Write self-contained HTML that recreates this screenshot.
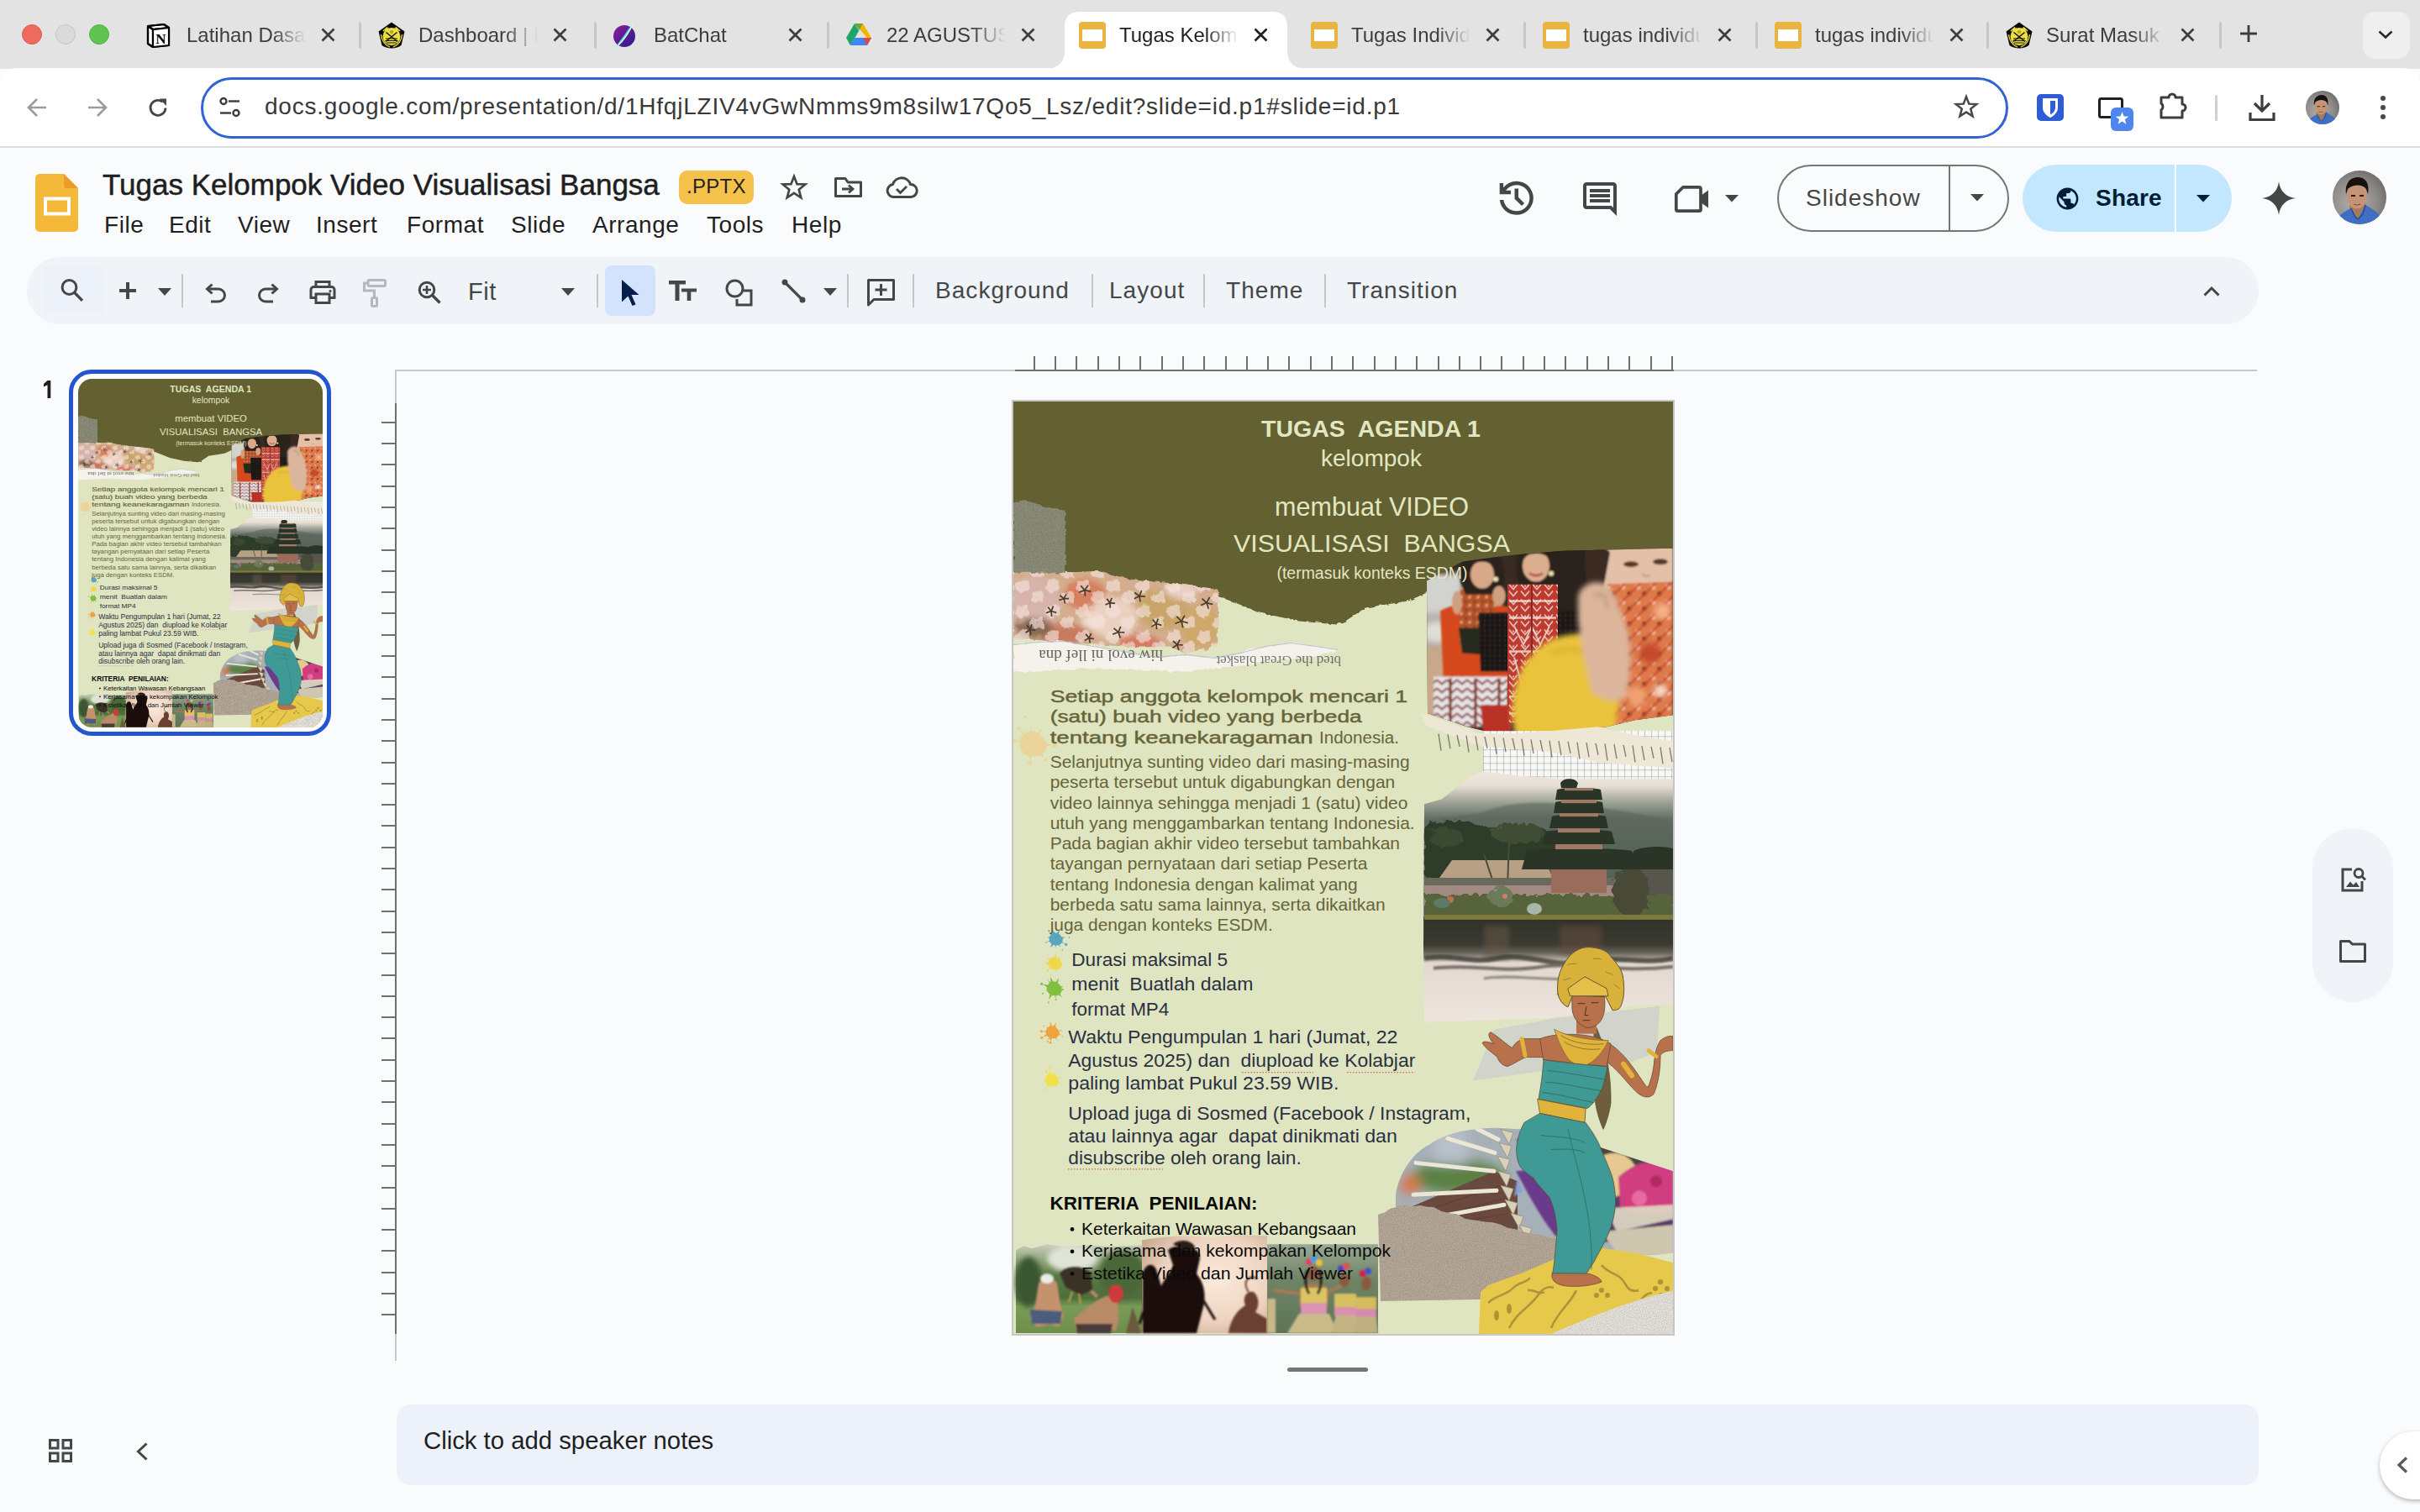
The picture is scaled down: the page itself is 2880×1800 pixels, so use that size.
<!DOCTYPE html>
<html><head><meta charset="utf-8">
<style>
*{box-sizing:border-box;margin:0;padding:0}
html,body{width:2880px;height:1800px;overflow:hidden;background:#f9fbfd;font-family:"Liberation Sans",sans-serif;position:relative}
.a{position:absolute}
.t{position:absolute;white-space:nowrap;line-height:1}
svg{position:absolute;overflow:visible}
.tl{width:24px;height:24px;border-radius:50%}
.tabtxt{font-size:24px;color:#3d3d3d;top:29px;overflow:hidden;width:142px;height:30px;line-height:26px;
 -webkit-mask-image:linear-gradient(90deg,#000 72%,transparent 100%)}
.sep{width:3px;height:32px;top:26px;background:#c7c7c7;border-radius:2px}
.slidesfav{width:32px;height:32px;border-radius:4px;background:#e9b43f;top:26px}
.slidesfav:after{content:"";position:absolute;left:4px;top:9px;width:24px;height:14px;background:#fff}
.menu{font-size:28px;color:#1f1f1f;top:254px;letter-spacing:0.55px;margin-left:-1px}
.tbt{font-size:28px;color:#444746;top:332px;letter-spacing:1.05px;margin-left:-2px}
.vsep{width:2px;height:40px;top:326px;background:#c7c7c7}
</style></head><body>
<!-- chrome -->
<div class="a" style="left:0;top:0;width:2880px;height:82px;background:#e3e3e3"></div>
<div class="a" style="left:0;top:81px;width:2880px;height:94px;background:#fff;border-radius:20px 20px 0 0"></div>
<div class="a" style="left:0;top:174px;width:2880px;height:2px;background:#dcdcdc"></div>
<div class="a tl" style="left:26px;top:29px;background:#ee6a5f;border:1px solid #dc5a4f"></div>
<div class="a tl" style="left:66px;top:29px;background:#dadada;border:1px solid #c4c4c4"></div>
<div class="a tl" style="left:106px;top:29px;background:#5fc452;border:1px solid #51b045"></div>
<svg style="left:0;top:0" width="2880" height="82"><path d="M1243 82 Q1267 82 1267 60 L1267 32 Q1267 14 1285 14 L1514 14 Q1532 14 1532 32 L1532 60 Q1532 82 1556 82 Z" fill="#fff"/></svg>
<!-- new tab + -->
<svg style="left:2666px;top:30px" width="20" height="20" viewBox="0 0 20 20"><path d="M10 0 V20 M0 10 H20" stroke="#3d3d3d" stroke-width="2.8"/></svg>
<div class="a" style="left:2812px;top:14px;width:56px;height:56px;border-radius:14px;background:#efefef"></div>
<svg style="left:2830px;top:36px" width="18" height="10" viewBox="0 0 18 10"><path d="M1.5 1.5 L9 8.5 L16.5 1.5" stroke="#2a2a2a" stroke-width="2.6" fill="none"/></svg>
<!-- nav -->
<svg style="left:32px;top:116px" width="24" height="24" viewBox="0 0 24 24"><path d="M23 12 H2 M12 2 L2 12 L12 22" stroke="#9a9a9a" stroke-width="2.6" fill="none"/></svg>
<svg style="left:104px;top:116px" width="24" height="24" viewBox="0 0 24 24"><path d="M1 12 H22 M12 2 L22 12 L12 22" stroke="#9a9a9a" stroke-width="2.6" fill="none"/></svg>
<svg style="left:176px;top:116px" width="25" height="25" viewBox="0 0 25 25"><path d="M21 12.5 A9 9 0 1 1 17.5 5.2" stroke="#474747" stroke-width="2.8" fill="none"/><path d="M13.5 1.5 L22 1.5 L22 10 Z" fill="#474747"/></svg>
<!-- omnibox -->
<div class="a" style="left:239px;top:92px;width:2151px;height:73px;border:3.5px solid #3064d2;border-radius:37px;background:#fff"></div>
<svg style="left:261px;top:116px" width="26" height="24" viewBox="0 0 26 24"><circle cx="5" cy="4.5" r="3.5" stroke="#3b3b3b" stroke-width="2.4" fill="none"/><path d="M11 4.5 H24" stroke="#3b3b3b" stroke-width="2.4"/><circle cx="20" cy="18.5" r="3.5" stroke="#3b3b3b" stroke-width="2.4" fill="none"/><path d="M1 18.5 H14" stroke="#3b3b3b" stroke-width="2.4"/></svg>
<div class="t" style="left:315px;top:113px;font-size:28px;color:#393939;letter-spacing:0.78px">docs.google.com/presentation/d/1HfqjLZIV4vGwNmms9m8silw17Qo5_Lsz/edit?slide=id.p1#slide=id.p1</div>
<svg style="left:2325px;top:112px" width="30" height="30" viewBox="0 0 24 24"><path d="M12 2.5 L14.6 9.3 L21.8 9.6 L16.2 14.1 L18.1 21.1 L12 17.1 L5.9 21.1 L7.8 14.1 L2.2 9.6 L9.4 9.3 Z" stroke="#474747" stroke-width="2" fill="none" stroke-linejoin="miter"/></svg>
<!-- extensions -->
<div class="a" style="left:2424px;top:112px;width:32px;height:32px;border-radius:5px;background:#2e5bd8"></div>
<svg style="left:2424px;top:112px" width="32" height="32" viewBox="0 0 32 32"><path d="M7 5 H25 V16 C25 22 20 26 16 28 C12 26 7 22 7 16 Z" fill="#fff"/><path d="M16 8 H22 V16 C22 20 19 23 16 24.5 Z" fill="#2e5bd8"/></svg>
<svg style="left:2497px;top:116px" width="44" height="40" viewBox="0 0 44 40"><rect x="1.5" y="1.5" width="27" height="22" rx="2" stroke="#1f1f1f" stroke-width="3" fill="none"/><rect x="15" y="12" width="27" height="28" rx="6" fill="#4f86ec"/><path d="M28.5 17 L30.6 22.5 L36.3 22.7 L31.8 26.2 L33.4 31.8 L28.5 28.5 L23.6 31.8 L25.2 26.2 L20.7 22.7 L26.4 22.5 Z" fill="#fff"/></svg>
<svg style="left:2569px;top:109px" width="34" height="34" viewBox="0 0 34 34"><path d="M3 7 H12 A4 4 0 0 1 20 7 H28 V15 A4 4 0 0 1 28 23 V31 H3 V22 A5 5 0 0 0 3 14 Z" stroke="#3d3d3d" stroke-width="3" fill="none" stroke-linejoin="round"/></svg>
<div class="a" style="left:2636px;top:113px;width:3px;height:31px;background:#d0d0d0;border-radius:2px"></div>
<svg style="left:2676px;top:112px" width="32" height="33" viewBox="0 0 32 33"><path d="M16 1 V20 M7 11 L16 20 L25 11" stroke="#3d3d3d" stroke-width="3.2" fill="none"/><path d="M2 22 V30.5 H30 V22" stroke="#3d3d3d" stroke-width="3.2" fill="none"/></svg>
<svg style="left:2744px;top:108px" width="40" height="40" viewBox="0 0 64 64"><defs><radialGradient id="avg1" cx=".4" cy=".6" r=".7"><stop offset="0" stop-color="#b3b0ad"/><stop offset=".6" stop-color="#8e8b88"/><stop offset="1" stop-color="#6a6664"/></radialGradient><clipPath id="avc1"><circle cx="32" cy="32" r="32"/></clipPath></defs><g clip-path="url(#avc1)"><rect width="64" height="64" fill="url(#avg1)"/><path d="M20 40 L39 38 L40 56 L20 56 Z" fill="#a87a5c"/><path d="M4 64 L8 54 C14 48 20 46 22 45 L30 58 L39 41 C44 44 52 48 56 54 L60 64 Z" fill="#3f6fc2"/><path d="M22 45 L26 54 L30 58 M39 41 L36 52 L30 58" stroke="#24458a" stroke-width="1.2" fill="none"/><ellipse cx="29" cy="30" rx="12" ry="15.5" fill="#c49474"/><path d="M16 28 C14 14 22 8 30 8 C40 8 44 16 42 28 L40 22 C36 16 24 16 18 22 Z" fill="#17120f"/><path d="M22 30 h5 M32 30 h5" stroke="#2a1a14" stroke-width="1.8"/><path d="M25 40 q4 2 8 0" stroke="#7a4a3a" stroke-width="1.2" fill="none"/></g></svg>
<div class="a" style="left:2833px;top:114px;width:6px;height:6px;border-radius:50%;background:#474747"></div>
<div class="a" style="left:2833px;top:125px;width:6px;height:6px;border-radius:50%;background:#474747"></div>
<div class="a" style="left:2833px;top:136px;width:6px;height:6px;border-radius:50%;background:#474747"></div>

<!-- tabs -->
<svg style="left:174px;top:27px" width="29" height="30" viewBox="0 0 29 30"><path d="M2 4 L21 2 L27 6 L27 27 L8 29 L2 25 Z" fill="#fff" stroke="#000" stroke-width="2.2" stroke-linejoin="round"/><path d="M2 4 L8 8 L27 6 M8 8 L8 29" stroke="#000" stroke-width="2.2" fill="none"/><path d="M8 8 L27 6 L27 27 L8 29 Z" fill="#fff"/><text x="17.5" y="24.5" font-family="Liberation Serif" font-weight="bold" font-size="17" text-anchor="middle" fill="#000">N</text><path d="M2 4 L21 2 L27 6 L27 27 L8 29 L2 25 Z" fill="none" stroke="#000" stroke-width="2.2" stroke-linejoin="round"/><path d="M2 4 L8 8 L27 6 M8 8 L8 29" stroke="#000" stroke-width="2.2" fill="none"/></svg>
<div class="t tabtxt" style="left:222px;color:#3d3d3d">Latihan Dasar Notion</div>
<svg style="left:382px;top:33px" width="17" height="17" viewBox="0 0 17 17"><path d="M1.5 1.5 L15.5 15.5 M15.5 1.5 L1.5 15.5" stroke="#3d3d3d" stroke-width="2.7"/></svg>
<div class="a sep" style="left:427px"></div>
<svg style="left:450px;top:26px" width="32" height="32" viewBox="0 0 32 32"><path d="M16 0.5 L31.5 11.5 L27.5 28 C22 32.5 10 32.5 4.5 28 L0.5 11.5 Z" fill="#0a0a0a"/><circle cx="16" cy="17.5" r="10.5" fill="#ece040"/><path d="M6 11 L11 6.5 L9.5 10 L13 8 M26 11 L21 6.5 L22.5 10 L19 8" stroke="#ece040" stroke-width="1.6" fill="none"/><path d="M3.5 15 C4 22 8 28 14 30 M28.5 15 C28 22 24 28 18 30" stroke="#d8c838" stroke-width="1.5" fill="none"/><path d="M9.5 12.5 L23 23.5 M22.5 12.5 L9 23.5" stroke="#111" stroke-width="1.5"/><path d="M9 20 H23 M8.5 22.5 H23.5 M10 25 H22" stroke="#111" stroke-width="1.1"/><circle cx="16" cy="12" r="2.2" fill="#b8a830"/></svg>
<div class="t tabtxt" style="left:498px;color:#3d3d3d">Dashboard | ESDM</div>
<svg style="left:658px;top:33px" width="17" height="17" viewBox="0 0 17 17"><path d="M1.5 1.5 L15.5 15.5 M15.5 1.5 L1.5 15.5" stroke="#3d3d3d" stroke-width="2.7"/></svg>
<div class="a sep" style="left:707px"></div>
<svg style="left:730px;top:26px" width="28" height="32" viewBox="0 0 28 32"><defs><linearGradient id="bg1" x1="0" y1="0" x2="1" y2="1"><stop offset="0" stop-color="#8a1f9e"/><stop offset="1" stop-color="#2a1a8a"/></linearGradient></defs><circle cx="13" cy="17" r="13" fill="url(#bg1)"/><path d="M24 1 C18 8 12 18 3 29 C10 26 17 18 24 1Z" fill="#6fe0d0"/><path d="M24 1 C20 10 14 20 6 28" stroke="#d8fff8" stroke-width="1.2" fill="none"/></svg>
<div class="t tabtxt" style="left:778px;color:#3d3d3d">BatChat</div>
<svg style="left:938px;top:33px" width="17" height="17" viewBox="0 0 17 17"><path d="M1.5 1.5 L15.5 15.5 M15.5 1.5 L1.5 15.5" stroke="#3d3d3d" stroke-width="2.7"/></svg>
<div class="a sep" style="left:984px"></div>
<svg style="left:1007px;top:28px" width="30" height="27" viewBox="0 0 30 27"><path d="M10 0 L20 0 L30 17 L25 17 Z" fill="#f6b400"/><path d="M10 0 L0 17 L5 26 L15 9 Z" fill="#20a464"/><path d="M5 26 L25 26 L30 17 L10 17 Z" fill="#4285f4"/><path d="M25 26 L30 17 L25 17 L20 17 Z" fill="#ea4335" opacity=".9"/><path d="M10 0 L15 9 L20 0Z" fill="#0f9d58" opacity=".6"/></svg>
<div class="t tabtxt" style="left:1055px;color:#3d3d3d">22 AGUSTUS 2025</div>
<svg style="left:1215px;top:33px" width="17" height="17" viewBox="0 0 17 17"><path d="M1.5 1.5 L15.5 15.5 M15.5 1.5 L1.5 15.5" stroke="#3d3d3d" stroke-width="2.7"/></svg>
<div class="a slidesfav" style="left:1284px"></div>
<div class="t tabtxt" style="left:1332px;color:#1f1f1f">Tugas Kelompok Video</div>
<svg style="left:1492px;top:33px" width="17" height="17" viewBox="0 0 17 17"><path d="M1.5 1.5 L15.5 15.5 M15.5 1.5 L1.5 15.5" stroke="#1f1f1f" stroke-width="2.7"/></svg>
<div class="a slidesfav" style="left:1560px"></div>
<div class="t tabtxt" style="left:1608px;color:#3d3d3d">Tugas Individu</div>
<svg style="left:1768px;top:33px" width="17" height="17" viewBox="0 0 17 17"><path d="M1.5 1.5 L15.5 15.5 M15.5 1.5 L1.5 15.5" stroke="#3d3d3d" stroke-width="2.7"/></svg>
<div class="a sep" style="left:1813px"></div>
<div class="a slidesfav" style="left:1836px"></div>
<div class="t tabtxt" style="left:1884px;color:#3d3d3d">tugas individu</div>
<svg style="left:2044px;top:33px" width="17" height="17" viewBox="0 0 17 17"><path d="M1.5 1.5 L15.5 15.5 M15.5 1.5 L1.5 15.5" stroke="#3d3d3d" stroke-width="2.7"/></svg>
<div class="a sep" style="left:2089px"></div>
<div class="a slidesfav" style="left:2112px"></div>
<div class="t tabtxt" style="left:2160px;color:#3d3d3d">tugas individu</div>
<svg style="left:2320px;top:33px" width="17" height="17" viewBox="0 0 17 17"><path d="M1.5 1.5 L15.5 15.5 M15.5 1.5 L1.5 15.5" stroke="#3d3d3d" stroke-width="2.7"/></svg>
<div class="a sep" style="left:2364px"></div>
<svg style="left:2387px;top:26px" width="32" height="32" viewBox="0 0 32 32"><path d="M16 0.5 L31.5 11.5 L27.5 28 C22 32.5 10 32.5 4.5 28 L0.5 11.5 Z" fill="#0a0a0a"/><circle cx="16" cy="17.5" r="10.5" fill="#ece040"/><path d="M6 11 L11 6.5 L9.5 10 L13 8 M26 11 L21 6.5 L22.5 10 L19 8" stroke="#ece040" stroke-width="1.6" fill="none"/><path d="M3.5 15 C4 22 8 28 14 30 M28.5 15 C28 22 24 28 18 30" stroke="#d8c838" stroke-width="1.5" fill="none"/><path d="M9.5 12.5 L23 23.5 M22.5 12.5 L9 23.5" stroke="#111" stroke-width="1.5"/><path d="M9 20 H23 M8.5 22.5 H23.5 M10 25 H22" stroke="#111" stroke-width="1.1"/><circle cx="16" cy="12" r="2.2" fill="#b8a830"/></svg>
<div class="t tabtxt" style="left:2435px;color:#3d3d3d">Surat Masuk</div>
<svg style="left:2595px;top:33px" width="17" height="17" viewBox="0 0 17 17"><path d="M1.5 1.5 L15.5 15.5 M15.5 1.5 L1.5 15.5" stroke="#3d3d3d" stroke-width="2.7"/></svg>
<div class="a sep" style="left:2641px"></div>
<!-- header -->
<!-- slides logo -->
<svg style="left:42px;top:207px" width="52" height="70" viewBox="0 0 52 70"><path d="M5 0 H34 L51 17 V64 A5 5 0 0 1 46 69 H5 A5 5 0 0 1 0 64 V5 A5 5 0 0 1 5 0Z" fill="#f5b93a"/><path d="M34 0 L51 17 H37 A3 3 0 0 1 34 14 Z" fill="#ef9a2c"/><rect x="10" y="27.5" width="32" height="22" fill="#fff"/><rect x="14" y="31.5" width="24" height="14" fill="#f5b93a"/></svg>
<div class="t" style="left:122px;top:202px;font-size:35px;color:#1f1f1f;letter-spacing:0px;-webkit-text-stroke:0.5px #1f1f1f">Tugas Kelompok Video Visualisasi Bangsa</div>
<div class="a" style="left:808px;top:203px;width:89px;height:40px;border-radius:10px;background:#f4c24a"></div>
<div class="t" style="left:817px;top:210px;font-size:24px;color:#1f1f1f;letter-spacing:0.3px">.PPTX</div>
<svg style="left:929px;top:207px" width="32" height="32" viewBox="0 0 24 24"><path d="M12 2.2 L14.7 9.1 L22 9.4 L16.3 14 L18.2 21.2 L12 17.1 L5.8 21.2 L7.7 14 L2 9.4 L9.3 9.1 Z" stroke="#444746" stroke-width="2" fill="none"/></svg>
<svg style="left:993px;top:211px" width="33" height="24" viewBox="0 0 33 24"><path d="M1.5 3 V22.5 H31.5 V6 H16 L13 1.5 H1.5 Z" stroke="#444746" stroke-width="3" fill="none" stroke-linejoin="round"/><path d="M9 14 H22 M17 9.5 L22 14 L17 18.5" stroke="#444746" stroke-width="2.8" fill="none"/></svg>
<svg style="left:1054px;top:210px" width="38" height="26" viewBox="0 0 38 26"><path d="M9 24.5 A7.5 7.5 0 0 1 8.5 9.6 A11 11 0 0 1 29.5 9.5 A7.5 7.5 0 0 1 30 24.5 Z" stroke="#444746" stroke-width="3" fill="none" stroke-linejoin="round"/><path d="M13 15 L17.5 19.5 L25 12" stroke="#444746" stroke-width="2.8" fill="none"/></svg>
<div class="t menu" style="left:125px">File</div>
<div class="t menu" style="left:202px">Edit</div>
<div class="t menu" style="left:284px">View</div>
<div class="t menu" style="left:377px">Insert</div>
<div class="t menu" style="left:485px">Format</div>
<div class="t menu" style="left:609px">Slide</div>
<div class="t menu" style="left:706px">Arrange</div>
<div class="t menu" style="left:842px">Tools</div>
<div class="t menu" style="left:943px">Help</div>
<!-- right header -->
<svg style="left:1778px;top:209px" width="53.5" height="53.5" viewBox="0 -960 960 960"><path d="M480-120q-138 0-240.5-91.5T122-440h82q14 104 92.5 172T480-200q117 0 198.5-81.5T760-480q0-117-81.5-198.5T480-760q-69 0-129 32t-101 88h110v80H120v-240h80v94q51-64 124.5-99T480-840q75 0 140.5 28.5t114 77q48.5 48.5 77 114T840-480q0 75-28.5 140.5t-77 114q-48.5 48.5-114 77T480-120Zm112-192L440-464v-216h80v184l128 128-56 56Z" fill="#444746"/></svg>
<svg style="left:1880px;top:213px" width="48" height="48" viewBox="0 0 24 24"><path d="M21.99 4c0-1.1-.89-2-1.99-2H4c-1.1 0-2 .9-2 2v12c0 1.1.9 2 2 2h14l4 4-.01-18zM20 4v13.17L18.83 16H4V4h16zM6 12h12v2H6zm0-3h12v2H6zm0-3h12v2H6z" fill="#444746"/></svg>
<svg style="left:1993px;top:221px" width="40" height="32" viewBox="0 0 40 32"><path d="M10 1.8 H29 A2 2 0 0 1 31 3.8 V28.2 A2 2 0 0 1 29 30.2 H3.8 A2 2 0 0 1 1.8 28.2 V10 Z" stroke="#444746" stroke-width="3.7" fill="none" stroke-linejoin="round"/><path d="M31 12 L40 5.5 V26.5 L31 20 Z" fill="#444746"/></svg>
<svg style="left:2053px;top:232px" width="16" height="9" viewBox="0 0 16 9"><path d="M0 0 H16 L8 8.5Z" fill="#444746"/></svg>
<div class="a" style="left:2115px;top:196px;width:276px;height:80px;border:2px solid #747775;border-radius:40px"></div>
<div class="a" style="left:2319px;top:197px;width:2px;height:78px;background:#747775"></div>
<div class="t" style="left:2149px;top:222px;font-size:28px;color:#444746;letter-spacing:1px">Slideshow</div>
<svg style="left:2345px;top:231px" width="16" height="9" viewBox="0 0 16 9"><path d="M0 0 H16 L8 8.5Z" fill="#444746"/></svg>
<div class="a" style="left:2407px;top:196px;width:249px;height:80px;border-radius:40px;background:#c2e7ff"></div>
<div class="a" style="left:2588px;top:196px;width:2px;height:80px;background:#fff"></div>
<svg style="left:2445px;top:221px" width="31" height="31" viewBox="0 0 24 24"><path d="M12 2C6.48 2 2 6.48 2 12s4.48 10 10 10 10-4.48 10-10S17.52 2 12 2zm-1 17.93c-3.95-.49-7-3.85-7-7.93 0-.62.08-1.21.21-1.79L9 15v1c0 1.1.9 2 2 2v1.93zm6.9-2.54c-.26-.81-1-1.39-1.9-1.39h-1v-3c0-.55-.45-1-1-1H8v-2h2c.55 0 1-.45 1-1V7h2c1.1 0 2-.9 2-2v-.41c2.93 1.19 5 4.06 5 7.41 0 2.08-.8 3.97-2.1 5.39z" fill="#001d35"/></svg>
<div class="t" style="left:2494px;top:222px;font-size:28px;font-weight:bold;color:#001d35;letter-spacing:0.2px">Share</div>
<svg style="left:2614px;top:232px" width="16" height="9" viewBox="0 0 16 9"><path d="M0 0 H16 L8 8.5Z" fill="#001d35"/></svg>
<svg style="left:2692px;top:216px" width="40" height="40" viewBox="0 0 40 40"><path d="M20 0 C21 11 29 19 40 20 C29 21 21 29 20 40 C19 29 11 21 0 20 C11 19 19 11 20 0Z" fill="#444746"/></svg>
<svg style="left:2776px;top:203px" width="64" height="64" viewBox="0 0 64 64"><defs><radialGradient id="avg2" cx=".4" cy=".6" r=".7"><stop offset="0" stop-color="#b3b0ad"/><stop offset=".6" stop-color="#8e8b88"/><stop offset="1" stop-color="#6a6664"/></radialGradient><clipPath id="avc2"><circle cx="32" cy="32" r="32"/></clipPath></defs><g clip-path="url(#avc2)"><rect width="64" height="64" fill="url(#avg2)"/><path d="M20 40 L39 38 L40 56 L20 56 Z" fill="#a87a5c"/><path d="M4 64 L8 54 C14 48 20 46 22 45 L30 58 L39 41 C44 44 52 48 56 54 L60 64 Z" fill="#3f6fc2"/><path d="M22 45 L26 54 L30 58 M39 41 L36 52 L30 58" stroke="#24458a" stroke-width="1.2" fill="none"/><ellipse cx="29" cy="30" rx="12" ry="15.5" fill="#c49474"/><path d="M16 28 C14 14 22 8 30 8 C40 8 44 16 42 28 L40 22 C36 16 24 16 18 22 Z" fill="#17120f"/><path d="M22 30 h5 M32 30 h5" stroke="#2a1a14" stroke-width="1.8"/><path d="M25 40 q4 2 8 0" stroke="#7a4a3a" stroke-width="1.2" fill="none"/></g></svg>

<!-- toolbar -->
<div class="a" style="left:32px;top:306px;width:2656px;height:80px;border-radius:40px;background:#f0f3f8"></div>
<div class="a" style="left:50px;top:318px;width:76px;height:56px;border-radius:8px;background:#edf1f9"></div>
<!-- search -->
<svg style="left:72px;top:332px" width="28" height="28" viewBox="0 0 28 28"><circle cx="10.5" cy="10" r="8.4" stroke="#444746" stroke-width="3" fill="none"/><path d="M16.8 16.5 L26 25.8" stroke="#444746" stroke-width="3.2"/></svg>
<svg style="left:142px;top:336px" width="20" height="20" viewBox="0 0 20 20"><path d="M10 0 V20 M0 10 H20" stroke="#444746" stroke-width="4"/></svg>
<svg style="left:188px;top:343px" width="16" height="9" viewBox="0 0 16 9"><path d="M0 0 H16 L8 9Z" fill="#444746"/></svg>
<div class="a vsep" style="left:216px"></div>
<!-- undo -->
<svg style="left:244px;top:337px" width="25" height="24" viewBox="0 0 25 24"><path d="M7 22 H16 A7.5 7.5 0 0 0 16 7 H3" stroke="#444746" stroke-width="3" fill="none"/><path d="M8.5 1.5 L2.5 7 L8.5 12.5" stroke="#444746" stroke-width="3" fill="none"/></svg>
<!-- redo -->
<svg style="left:307px;top:337px" width="25" height="24" viewBox="0 0 25 24"><path d="M18 22 H9 A7.5 7.5 0 0 1 9 7 H22" stroke="#444746" stroke-width="3" fill="none"/><path d="M16.5 1.5 L22.5 7 L16.5 12.5" stroke="#444746" stroke-width="3" fill="none"/></svg>
<!-- print -->
<svg style="left:368px;top:334px" width="32" height="28" viewBox="0 0 32 28"><path d="M8 7 V1.5 H24 V7" stroke="#444746" stroke-width="3" fill="none"/><path d="M7.5 20.5 H2 V11 A3.5 3.5 0 0 1 5.5 7.5 H26.5 A3.5 3.5 0 0 1 30 11 V20.5 H24.5" stroke="#444746" stroke-width="3" fill="none"/><rect x="8" y="16" width="16" height="10.5" stroke="#444746" stroke-width="3" fill="none"/><circle cx="25" cy="12.5" r="1.6" fill="#444746"/></svg>
<!-- paint format -->
<svg style="left:432px;top:332px" width="28" height="34" viewBox="0 0 28 34"><rect x="6" y="1.5" width="20.5" height="7" rx="1.5" stroke="#b4b7bb" stroke-width="3" fill="none"/><path d="M6 5 H1.5 V14 H13.5 V23" stroke="#b4b7bb" stroke-width="3" fill="none"/><rect x="10.5" y="22.5" width="6" height="10" rx="1.5" stroke="#b4b7bb" stroke-width="3" fill="none"/></svg>
<!-- zoom -->
<svg style="left:497px;top:334px" width="29" height="28" viewBox="0 0 29 28"><circle cx="11" cy="11" r="8.8" stroke="#444746" stroke-width="3" fill="none"/><path d="M17.5 17.5 L26.5 26.5" stroke="#444746" stroke-width="3.4"/><path d="M11 6 V16 M6 11 H16" stroke="#444746" stroke-width="2.6"/></svg>
<div class="t" style="left:557px;top:333px;font-size:29px;color:#444746;letter-spacing:0.5px">Fit</div>
<svg style="left:668px;top:343px" width="16" height="9" viewBox="0 0 16 9"><path d="M0 0 H16 L8 9Z" fill="#444746"/></svg>
<div class="a vsep" style="left:710px"></div>
<!-- select -->
<div class="a" style="left:720px;top:316px;width:60px;height:60px;border-radius:8px;background:#d3e3fd"></div>
<svg style="left:739px;top:332px" width="23" height="33" viewBox="0 0 23 33"><path d="M1.5 1.5 L21.5 19 L12.5 19 L17.5 30.5 L13.5 32 L8.5 20.5 L1.5 27 Z" fill="#041e49"/><path d="M1.5 1.5 L1.5 27" stroke="#041e49" stroke-width="1"/></svg>
<!-- Tt -->
<svg style="left:796px;top:334px" width="33" height="25" viewBox="0 0 33 25"><path d="M0 0 H20 V4.5 H12.5 V24 H7.5 V4.5 H0 Z" fill="#444746"/><path d="M15 9.5 H33 V13.5 H26.3 V24 H21.7 V13.5 H15 Z" fill="#444746"/></svg>
<!-- shapes -->
<svg style="left:863px;top:332px" width="33" height="33" viewBox="0 0 33 33"><circle cx="11.5" cy="11.5" r="9.5" stroke="#444746" stroke-width="3" fill="none"/><path d="M22 14 H31 V31 H14 V24" stroke="#444746" stroke-width="3" fill="none"/></svg>
<!-- line -->
<svg style="left:930px;top:332px" width="29" height="29" viewBox="0 0 29 29"><path d="M4 4 L25 25" stroke="#444746" stroke-width="3.2"/><circle cx="4" cy="4" r="3.5" fill="#444746"/><circle cx="25" cy="25" r="3.5" fill="#444746"/></svg>
<svg style="left:980px;top:343px" width="16" height="9" viewBox="0 0 16 9"><path d="M0 0 H16 L8 9Z" fill="#444746"/></svg>
<div class="a vsep" style="left:1008px"></div>
<!-- comment add -->
<svg style="left:1032px;top:332px" width="33" height="33" viewBox="0 0 33 33"><path d="M1.5 1.5 H31.5 V24.5 H8 L1.5 31 Z" stroke="#444746" stroke-width="3" fill="none" stroke-linejoin="round"/><path d="M16.5 6 V20 M9.5 13 H23.5" stroke="#444746" stroke-width="3"/></svg>
<div class="a vsep" style="left:1086px"></div>
<div class="t tbt" style="left:1115px">Background</div>
<div class="a vsep" style="left:1299px"></div>
<div class="t tbt" style="left:1322px">Layout</div>
<div class="a vsep" style="left:1432px"></div>
<div class="t tbt" style="left:1461px">Theme</div>
<div class="a vsep" style="left:1576px"></div>
<div class="t tbt" style="left:1605px">Transition</div>
<svg style="left:2622px;top:341px" width="20" height="12" viewBox="0 0 20 12"><path d="M1.5 10.5 L10 2 L18.5 10.5" stroke="#444746" stroke-width="3" fill="none"/></svg>

<!-- main -->
<div class="a" style="left:471px;top:440px;width:2215px;height:2px;background:#c7c9c8"></div>
<div class="a" style="left:1208px;top:440px;width:784px;height:2px;background:#6f716f"></div>
<div class="a" style="left:1229.8px;top:424px;width:2px;height:16px;background:#6f716f"></div>
<div class="a" style="left:1255.1px;top:424px;width:2px;height:16px;background:#6f716f"></div>
<div class="a" style="left:1280.4px;top:424px;width:2px;height:16px;background:#6f716f"></div>
<div class="a" style="left:1305.7px;top:424px;width:2px;height:16px;background:#6f716f"></div>
<div class="a" style="left:1331.0px;top:424px;width:2px;height:16px;background:#6f716f"></div>
<div class="a" style="left:1356.3px;top:424px;width:2px;height:16px;background:#6f716f"></div>
<div class="a" style="left:1381.6px;top:424px;width:2px;height:16px;background:#6f716f"></div>
<div class="a" style="left:1406.9px;top:424px;width:2px;height:16px;background:#6f716f"></div>
<div class="a" style="left:1432.2px;top:424px;width:2px;height:16px;background:#6f716f"></div>
<div class="a" style="left:1457.5px;top:424px;width:2px;height:16px;background:#6f716f"></div>
<div class="a" style="left:1482.8px;top:424px;width:2px;height:16px;background:#6f716f"></div>
<div class="a" style="left:1508.1px;top:424px;width:2px;height:16px;background:#6f716f"></div>
<div class="a" style="left:1533.4px;top:424px;width:2px;height:16px;background:#6f716f"></div>
<div class="a" style="left:1558.7px;top:424px;width:2px;height:16px;background:#6f716f"></div>
<div class="a" style="left:1584.0px;top:424px;width:2px;height:16px;background:#6f716f"></div>
<div class="a" style="left:1609.3px;top:424px;width:2px;height:16px;background:#6f716f"></div>
<div class="a" style="left:1634.6px;top:424px;width:2px;height:16px;background:#6f716f"></div>
<div class="a" style="left:1659.9px;top:424px;width:2px;height:16px;background:#6f716f"></div>
<div class="a" style="left:1685.2px;top:424px;width:2px;height:16px;background:#6f716f"></div>
<div class="a" style="left:1710.5px;top:424px;width:2px;height:16px;background:#6f716f"></div>
<div class="a" style="left:1735.8px;top:424px;width:2px;height:16px;background:#6f716f"></div>
<div class="a" style="left:1761.1px;top:424px;width:2px;height:16px;background:#6f716f"></div>
<div class="a" style="left:1786.4px;top:424px;width:2px;height:16px;background:#6f716f"></div>
<div class="a" style="left:1811.7px;top:424px;width:2px;height:16px;background:#6f716f"></div>
<div class="a" style="left:1837.0px;top:424px;width:2px;height:16px;background:#6f716f"></div>
<div class="a" style="left:1862.3px;top:424px;width:2px;height:16px;background:#6f716f"></div>
<div class="a" style="left:1887.6px;top:424px;width:2px;height:16px;background:#6f716f"></div>
<div class="a" style="left:1912.9px;top:424px;width:2px;height:16px;background:#6f716f"></div>
<div class="a" style="left:1938.2px;top:424px;width:2px;height:16px;background:#6f716f"></div>
<div class="a" style="left:1963.5px;top:424px;width:2px;height:16px;background:#6f716f"></div>
<div class="a" style="left:1988.8px;top:424px;width:2px;height:16px;background:#6f716f"></div>
<div class="a" style="left:470px;top:440px;width:2px;height:1180px;background:#c7c9c8"></div>
<div class="a" style="left:470px;top:480px;width:2px;height:1108px;background:#6f716f"></div>
<div class="a" style="left:454px;top:501.7px;width:17px;height:2px;background:#6f716f"></div>
<div class="a" style="left:454px;top:527.0px;width:17px;height:2px;background:#6f716f"></div>
<div class="a" style="left:454px;top:552.3px;width:17px;height:2px;background:#6f716f"></div>
<div class="a" style="left:454px;top:577.6px;width:17px;height:2px;background:#6f716f"></div>
<div class="a" style="left:454px;top:602.9px;width:17px;height:2px;background:#6f716f"></div>
<div class="a" style="left:454px;top:628.2px;width:17px;height:2px;background:#6f716f"></div>
<div class="a" style="left:454px;top:653.5px;width:17px;height:2px;background:#6f716f"></div>
<div class="a" style="left:454px;top:678.8px;width:17px;height:2px;background:#6f716f"></div>
<div class="a" style="left:454px;top:704.1px;width:17px;height:2px;background:#6f716f"></div>
<div class="a" style="left:454px;top:729.4px;width:17px;height:2px;background:#6f716f"></div>
<div class="a" style="left:454px;top:754.7px;width:17px;height:2px;background:#6f716f"></div>
<div class="a" style="left:454px;top:780.0px;width:17px;height:2px;background:#6f716f"></div>
<div class="a" style="left:454px;top:805.3px;width:17px;height:2px;background:#6f716f"></div>
<div class="a" style="left:454px;top:830.6px;width:17px;height:2px;background:#6f716f"></div>
<div class="a" style="left:454px;top:855.9px;width:17px;height:2px;background:#6f716f"></div>
<div class="a" style="left:454px;top:881.2px;width:17px;height:2px;background:#6f716f"></div>
<div class="a" style="left:454px;top:906.5px;width:17px;height:2px;background:#6f716f"></div>
<div class="a" style="left:454px;top:931.8px;width:17px;height:2px;background:#6f716f"></div>
<div class="a" style="left:454px;top:957.1px;width:17px;height:2px;background:#6f716f"></div>
<div class="a" style="left:454px;top:982.4px;width:17px;height:2px;background:#6f716f"></div>
<div class="a" style="left:454px;top:1007.7px;width:17px;height:2px;background:#6f716f"></div>
<div class="a" style="left:454px;top:1033.0px;width:17px;height:2px;background:#6f716f"></div>
<div class="a" style="left:454px;top:1058.3px;width:17px;height:2px;background:#6f716f"></div>
<div class="a" style="left:454px;top:1083.6px;width:17px;height:2px;background:#6f716f"></div>
<div class="a" style="left:454px;top:1108.9px;width:17px;height:2px;background:#6f716f"></div>
<div class="a" style="left:454px;top:1134.2px;width:17px;height:2px;background:#6f716f"></div>
<div class="a" style="left:454px;top:1159.5px;width:17px;height:2px;background:#6f716f"></div>
<div class="a" style="left:454px;top:1184.8px;width:17px;height:2px;background:#6f716f"></div>
<div class="a" style="left:454px;top:1210.1px;width:17px;height:2px;background:#6f716f"></div>
<div class="a" style="left:454px;top:1235.4px;width:17px;height:2px;background:#6f716f"></div>
<div class="a" style="left:454px;top:1260.7px;width:17px;height:2px;background:#6f716f"></div>
<div class="a" style="left:454px;top:1286.0px;width:17px;height:2px;background:#6f716f"></div>
<div class="a" style="left:454px;top:1311.3px;width:17px;height:2px;background:#6f716f"></div>
<div class="a" style="left:454px;top:1336.6px;width:17px;height:2px;background:#6f716f"></div>
<div class="a" style="left:454px;top:1361.9px;width:17px;height:2px;background:#6f716f"></div>
<div class="a" style="left:454px;top:1387.2px;width:17px;height:2px;background:#6f716f"></div>
<div class="a" style="left:454px;top:1412.5px;width:17px;height:2px;background:#6f716f"></div>
<div class="a" style="left:454px;top:1437.8px;width:17px;height:2px;background:#6f716f"></div>
<div class="a" style="left:454px;top:1463.1px;width:17px;height:2px;background:#6f716f"></div>
<div class="a" style="left:454px;top:1488.4px;width:17px;height:2px;background:#6f716f"></div>
<div class="a" style="left:454px;top:1513.7px;width:17px;height:2px;background:#6f716f"></div>
<div class="a" style="left:454px;top:1539.0px;width:17px;height:2px;background:#6f716f"></div>
<div class="a" style="left:454px;top:1564.3px;width:17px;height:2px;background:#6f716f"></div>
<svg style="left:50px;top:452px" width="12" height="23" viewBox="0 0 12 23"><path d="M6.5 1 H10.3 V22 H6.5 V6.2 L2 8.6 V5 Z" fill="#1f1f1f"/></svg>
<div class="a" style="left:82px;top:440px;width:312px;height:436px;border:5.5px solid #2356ce;border-radius:27px;background:#fff"></div>
<div class="a" style="left:2752px;top:986px;width:96px;height:207px;border-radius:48px;background:#f0f4f9"></div>
<svg style="left:2785px;top:1031px" width="32" height="32" viewBox="0 0 32 32"><path d="M14 4 H3 V29 H26 V18" stroke="#444746" stroke-width="3" fill="none"/><path d="M7 25 L12 18.5 L15.5 22.5 L19 19 L23 25 Z" fill="#444746"/><circle cx="22" cy="8.5" r="5" stroke="#444746" stroke-width="2.8" fill="none"/><path d="M25.5 12 L30 16.5" stroke="#444746" stroke-width="3"/></svg>
<svg style="left:2784px;top:1119px" width="32" height="27" viewBox="0 0 32 27"><path d="M1.5 1.5 H12 L15.5 5 H30.5 V25.5 H1.5 Z" stroke="#444746" stroke-width="3" fill="none" stroke-linejoin="round"/></svg>
<div class="a" style="left:1532px;top:1628px;width:96px;height:5px;border-radius:3px;background:#747775"></div>
<div class="a" style="left:472px;top:1672px;width:2216px;height:96px;border-radius:18px;background:#edf2fa"></div>
<div class="t" style="left:504px;top:1700px;font-size:29.3px;color:#1f1f1f">Click to add speaker notes</div>
<svg style="left:58px;top:1713px" width="28" height="28" viewBox="0 0 28 28"><rect x="1.5" y="1.5" width="9.5" height="9.5" stroke="#444746" stroke-width="3" fill="none"/><rect x="17" y="1.5" width="9.5" height="9.5" stroke="#444746" stroke-width="3" fill="none"/><rect x="1.5" y="17" width="9.5" height="9.5" stroke="#444746" stroke-width="3" fill="none"/><rect x="17" y="17" width="9.5" height="9.5" stroke="#444746" stroke-width="3" fill="none"/></svg>
<svg style="left:161px;top:1717px" width="16" height="22" viewBox="0 0 16 22"><path d="M13.5 1.5 L3.5 11 L13.5 20.5" stroke="#444746" stroke-width="3" fill="none"/></svg>
<div class="a" style="left:2832px;top:1704px;width:100px;height:81px;border-radius:40px;background:#fff;box-shadow:0 2px 5px rgba(0,0,0,.28)"></div>
<svg style="left:2852px;top:1734px" width="14" height="20" viewBox="0 0 14 20"><path d="M12 1.5 L3 10 L12 18.5" stroke="#575b60" stroke-width="3.2" fill="none"/></svg>
<!-- slide -->
<div class="a" style="left:1204px;top:476px;width:789px;height:1114px;background:#c6c7c5"></div>
<svg style="left:1206px;top:478px" width="785" height="1110" viewBox="0 0 785 1112" preserveAspectRatio="none"><defs><clipPath id="slideClip"><rect width="785" height="1112"/></clipPath></defs><g id="slideContent" clip-path="url(#slideClip)">
<defs>
<clipPath id="womenClip"><path d="M492 214 L534 191 L594 183 L654 178 L785 175 V374 L740 380 L706 388 L650 395 L590 400 L540 388 L493 372 Z"/></clipPath>
<clipPath id="floralClip"><path d="M0 204 L62 204 L100 202 L130 210 L160 214 L200 218 L243 224 L245 250 L243 290 L225 296 L205 300 L185 292 L150 293 L100 290 L60 287 L0 282 Z"/></clipPath>
<clipPath id="templeClip"><path d="M489 480 L510 474 L530 458 L545 446 L560 441 L600 446 L650 450 L700 450 L785 450 V718 L740 720 L700 728 L640 735 L560 738 L489 740 L488 650 Z"/></clipPath>
<clipPath id="offerClip"><path d="M455 990 L455 946 C460 915 480 893 494 887 C510 876 530 868 572 866 L640 870 L700 890 L785 918 V1015 L761 1018 L700 1018 L600 1000 Z"/></clipPath>
<clipPath id="thumbClip"><rect width="785" height="1112" rx="44" ry="44"/></clipPath>
<filter id="soft" x="-10%" y="-10%" width="120%" height="120%"><feGaussianBlur stdDeviation="3"/></filter>
<filter id="soft2" x="-20%" y="-20%" width="140%" height="140%"><feGaussianBlur stdDeviation="7"/></filter>
<filter id="soft1" x="-10%" y="-10%" width="120%" height="120%"><feGaussianBlur stdDeviation="1.2"/></filter>
<filter id="grain" x="0" y="0" width="100%" height="100%"><feTurbulence type="fractalNoise" baseFrequency="0.9" numOctaves="2" seed="3" result="n"/><feColorMatrix in="n" type="matrix" values="0 0 0 0 0.5  0 0 0 0 0.5  0 0 0 0 0.5  0 0 0 1.2 -0.35"/><feComposite in2="SourceGraphic" operator="in"/><feBlend in2="SourceGraphic" mode="multiply"/></filter>
<filter id="torn" x="-5%" y="-5%" width="110%" height="110%"><feTurbulence type="fractalNoise" baseFrequency="0.12" numOctaves="3" seed="4"/><feDisplacementMap in="SourceGraphic" scale="6"/></filter>
<filter id="leaf" x="-5%" y="-5%" width="110%" height="110%"><feTurbulence type="fractalNoise" baseFrequency="0.15" numOctaves="2" seed="7"/><feDisplacementMap in="SourceGraphic" scale="10"/></filter>
<pattern id="batikRed" width="14" height="18" patternUnits="userSpaceOnUse"><rect width="14" height="18" fill="#bd3a2e"/><path d="M2 2 L7 8 L12 2 M2 10 L7 16 L12 10" stroke="#f0ddd4" stroke-width="1.3" fill="none"/><circle cx="7" cy="4" r="1" fill="#f0ddd4"/></pattern>
<pattern id="batikOr" width="10" height="10" patternUnits="userSpaceOnUse"><rect width="10" height="10" fill="#b4502a"/><circle cx="3" cy="3" r="1.6" fill="#f0d8b0"/><circle cx="8" cy="8" r="1.4" fill="#3a2418"/><path d="M0 5 L5 0 M5 10 L10 5" stroke="#d8782c" stroke-width="1"/></pattern>
<pattern id="lace" width="6" height="6" patternUnits="userSpaceOnUse"><rect width="6" height="6" fill="#1c1816"/><circle cx="3" cy="3" r="1.2" fill="#3a302a"/></pattern>
<pattern id="skirt" width="12" height="10" patternUnits="userSpaceOnUse"><rect width="12" height="10" fill="#e6e2e6"/><path d="M0 2 L6 7 L12 2" stroke="#7a3222" stroke-width="2" fill="none"/></pattern>
<pattern id="orCloth" width="18" height="18" patternUnits="userSpaceOnUse"><rect width="18" height="18" fill="#de7a4a"/><circle cx="5" cy="5" r="3" fill="#f6d0b8"/><circle cx="13" cy="13" r="2.5" fill="#2a1a14"/><path d="M0 9 L9 0 M9 18 L18 9" stroke="#c84a2a" stroke-width="2.5"/></pattern>
<pattern id="flowers" width="36" height="30" patternUnits="userSpaceOnUse"><g fill="#f4e2dc" opacity=".85"><circle cx="8" cy="8" r="4"/><circle cx="14" cy="6" r="4"/><circle cx="15" cy="12" r="4"/><circle cx="9" cy="14" r="4"/><circle cx="5" cy="11" r="3.5"/><circle cx="26" cy="22" r="4"/><circle cx="32" cy="20" r="4"/><circle cx="33" cy="26" r="3.5"/><circle cx="27" cy="28" r="3.5"/><circle cx="23" cy="25" r="3"/></g></pattern>
<pattern id="grid" width="8" height="8" patternUnits="userSpaceOnUse"><path d="M8 0 V8 H0" fill="none" stroke="#6e6e6e" stroke-width="0.9"/></pattern>
<linearGradient id="sky" x1="0" y1="0" x2="0" y2="1">
 <stop offset="0" stop-color="#f0e8de"/><stop offset=".1" stop-color="#e8dfd4"/><stop offset=".2" stop-color="#a4a89c"/><stop offset=".32" stop-color="#646e64"/><stop offset=".5" stop-color="#56625a"/>
</linearGradient>
<linearGradient id="water" x1="0" y1="0" x2="0" y2="1">
 <stop offset="0" stop-color="#30322a"/><stop offset=".25" stop-color="#3a3a30"/><stop offset=".33" stop-color="#6a665e"/><stop offset=".42" stop-color="#e2d8d0"/><stop offset="1" stop-color="#efe6de"/>
</linearGradient>
</defs>
<rect x="0" y="0" width="785" height="1112" fill="#dfe5c0"/>
<path filter="url(#torn)" d="M-10 -10 H795 V212 L740 218 L700 222 L600 232 L492 228 L470 238 L419 246 L395 262 L385 266 L340 262 L294 252 L269 242 L243 232 L200 222 L134 211 L94 206 L61 203 L-10 200 Z" fill="#646033"/>
<g filter="url(#torn)"><path d="M0 121 L10 118 L22 120 L35 125 L45 128 L62 130 V205 L30 207 L0 206 Z" fill="#8e8f7b" filter="url(#grain)"/></g>
<g filter="url(#torn)"><g clip-path="url(#floralClip)"><rect x="0" y="195" width="250" height="110" fill="#d4ad8e"/><g filter="url(#soft)"><ellipse cx="25" cy="238" rx="32" ry="30" fill="#d6b4aa"/><ellipse cx="85" cy="230" rx="25" ry="18" fill="#d5805f"/><ellipse cx="118" cy="258" rx="30" ry="25" fill="#ead0c0"/><ellipse cx="178" cy="248" rx="30" ry="24" fill="#c9a56a"/><ellipse cx="222" cy="268" rx="24" ry="26" fill="#cfa86c"/><ellipse cx="60" cy="277" rx="32" ry="12" fill="#c77a60"/><ellipse cx="150" cy="288" rx="25" ry="10" fill="#d67a64"/><ellipse cx="25" cy="270" rx="22" ry="12" fill="#8a6a52"/><ellipse cx="200" cy="225" rx="20" ry="10" fill="#e8d0c4"/><ellipse cx="95" cy="262" rx="14" ry="10" fill="#f0dcd0"/></g><rect x="0" y="195" width="250" height="110" fill="url(#flowers)" opacity=".75"/></g></g>
<path d="M85 225 M85 225 L92.1 226.6 M85 225 L85.5 232.2 M85 225 L78.2 227.5 M85 225 L80.2 219.6 M85 225 L89.0 219.0 " stroke="#4a3a2c" stroke-width="1.7"/>
<path d="M115 240 M115 240 L121.0 240.8 M115 240 L115.2 246.1 M115 240 L109.5 242.5 M115 240 L111.2 235.3 M115 240 L117.1 234.3 " stroke="#4a3a2c" stroke-width="1.7"/>
<path d="M150 232 M150 232 L156.9 232.5 M150 232 L151.0 238.9 M150 232 L143.8 235.1 M150 232 L144.4 227.9 M150 232 L152.6 225.6 " stroke="#4a3a2c" stroke-width="1.7"/>
<path d="M170 265 M170 265 L176.3 266.8 M170 265 L170.6 271.5 M170 265 L164.5 268.6 M170 265 L165.8 260.0 M170 265 L172.3 258.9 " stroke="#4a3a2c" stroke-width="1.7"/>
<path d="M125 275 M125 275 L132.2 275.3 M125 275 L127.2 281.9 M125 275 L118.2 277.6 M125 275 L119.4 270.4 M125 275 L127.7 268.3 " stroke="#4a3a2c" stroke-width="1.7"/>
<path d="M200 262 M200 262 L207.7 264.1 M200 262 L201.8 269.8 M200 262 L192.5 264.7 M200 262 L194.4 256.3 M200 262 L203.9 255.1 " stroke="#4a3a2c" stroke-width="1.7"/>
<path d="M45 250 M45 250 L51.2 251.8 M45 250 L45.7 256.4 M45 250 L39.0 252.1 M45 250 L41.0 245.0 M45 250 L47.5 244.1 " stroke="#4a3a2c" stroke-width="1.7"/>
<path d="M195 290 M195 290 L201.7 290.3 M195 290 L196.8 296.5 M195 290 L189.5 293.8 M195 290 L189.9 285.6 M195 290 L198.2 284.1 " stroke="#4a3a2c" stroke-width="1.7"/>
<path d="M90 282 M90 282 L95.9 283.2 M90 282 L91.3 287.9 M90 282 L84.8 285.1 M90 282 L86.1 277.4 M90 282 L92.7 276.6 " stroke="#4a3a2c" stroke-width="1.7"/>
<path d="M20 272 M20 272 L26.6 273.0 M20 272 L20.7 278.6 M20 272 L14.6 275.8 M20 272 L16.0 266.7 M20 272 L22.1 265.7 " stroke="#4a3a2c" stroke-width="1.7"/>
<path d="M230 240 M230 240 L237.3 241.9 M230 240 L232.3 247.1 M230 240 L223.1 242.9 M230 240 L224.5 235.0 M230 240 L233.5 233.4 " stroke="#4a3a2c" stroke-width="1.7"/>
<path d="M60 235 M60 235 L66.0 235.1 M60 235 L61.5 240.8 M60 235 L54.3 237.0 M60 235 L55.3 231.2 M60 235 L63.1 229.8 " stroke="#4a3a2c" stroke-width="1.7"/>
<g filter="url(#torn)"><path d="M0 290 L30 287 L60 286 L95 292 L130 298 L170 305 L205 302 L240 306 L270 300 L300 292 L330 288 L360 292 L386 296 L362 304 L320 308 L280 314 L240 318 L200 322 L150 320 L100 318 L50 320 L0 323 Z" fill="#f4f2ea"/></g>
<text xml:space="preserve" x="2" y="309" font-family="Liberation Serif" font-size="19" font-weight="normal" fill="#4a4a4a" text-anchor="start" transform="rotate(180 90 303)" opacity=".85">hiw evol ni llef dna</text>
<text xml:space="preserve" x="190" y="314" font-family="Liberation Serif" font-size="17" font-weight="normal" fill="#4a4a4a" text-anchor="start" transform="rotate(180 290 309)" opacity=".75">bted the Great blasket</text>
<path d="M0 290 L30 287 L60 286 L95 292 L130 298 L170 305 L205 302 L240 306 L270 300 L300 292 L330 288 L360 292 L386 296" stroke="#a0a8d8" stroke-width="1.2" fill="none" opacity=".6"/>
<g clip-path="url(#womenClip)"><rect x="480" y="170" width="310" height="240" fill="#3a2a24"/><g filter="url(#soft)"><rect x="480" y="205" width="55" height="50" fill="#d2d2ce"/><rect x="480" y="252" width="45" height="40" fill="#b8b2aa"/><ellipse cx="505" cy="275" rx="18" ry="12" fill="#e0ddd6"/><rect x="480" y="292" width="50" height="85" fill="#c8a888"/><rect x="640" y="170" width="60" height="90" fill="#2a221e"/></g><g filter="url(#soft1)"><path d="M508 250 C520 240 560 238 590 245 L590 338 L512 336 Z" fill="#d64a1c"/><path d="M532 222 L575 220 L574 290 L530 292 Z" fill="url(#batikOr)"/><path d="M530 270 L562 270 L560 302 L534 300 Z" fill="#262a1e"/><path d="M532 215 C530 190 540 176 558 176 C578 176 586 192 584 215 L578 230 L538 230 Z" fill="#2a201c"/><ellipse cx="558" cy="206" rx="14" ry="17" fill="#d9a888"/><path d="M544 196 C548 186 568 186 572 196" stroke="#2a201c" stroke-width="5" fill="none"/><circle cx="574" cy="212" r="3" fill="#f0e0b0"/><path d="M553 252 L686 250 L684 322 L556 322 Z" fill="url(#lace)"/><path d="M598 200 C596 180 606 168 622 168 C642 168 652 182 650 200 L646 218 L602 218 Z" fill="#2a201c"/><ellipse cx="622" cy="196" rx="16" ry="19" fill="#dcae90"/><path d="M606 186 C612 176 632 176 640 186" stroke="#2a201c" stroke-width="5" fill="none"/><path d="M614 205 q8 5 16 0" stroke="#b04838" stroke-width="2.5" fill="none"/><circle cx="640" cy="205" r="3" fill="#f0e0b0"/><rect x="500" y="328" width="88" height="60" fill="url(#skirt)"/><path d="M520 330 V392 M550 330 V392 M578 330 V392" stroke="#7a3222" stroke-width="3"/><path d="M556 362 L596 362 L590 404 L560 404 Z" fill="#b83028"/><ellipse cx="528" cy="240" rx="6" ry="14" fill="#d0a080"/><ellipse cx="578" cy="232" rx="8" ry="12" fill="#d0a080"/></g><rect x="588" y="218" width="60" height="165" fill="url(#batikRed)"/><g opacity=".8" stroke="#f2e2da" fill="none"><path d="M590 238 H646 M590 258 H646 M590 298 H646 M590 352 H646 M590 372 H646" stroke-width="2.5"/><path d="M596 268 L607 290 L617 268 L627 290 L638 268 M596 305 L607 345 L617 305 L627 345 L638 305" stroke-width="2"/></g><path d="M617 218 V383" stroke="#8a2a22" stroke-width="2"/><g filter="url(#soft1)"><path d="M690 176 L785 172 L785 225 C760 232 720 230 690 222 Z" fill="#e4c0a8"/><ellipse cx="735" cy="194" rx="9" ry="3.5" fill="#5a3a2a"/><ellipse cx="770" cy="191" rx="9" ry="3.5" fill="#5a3a2a"/><path d="M748 205 q4 6 10 2" stroke="#c89880" stroke-width="2" fill="none"/><path d="M680 176 C690 170 705 172 710 180 L700 235 L682 232 Z" fill="#3a2a22"/><path d="M707 218 L785 215 L785 390 L707 388 Z" fill="url(#orCloth)"/></g><g filter="url(#soft)"><circle cx="758" cy="300" r="12" fill="#c64a2c"/><circle cx="742" cy="352" r="12" fill="#f0a070"/><circle cx="772" cy="250" r="10" fill="#f4b088"/><circle cx="770" cy="345" r="8" fill="#f6d8c8"/><path d="M597 400 C588 350 600 305 640 284 C668 272 705 276 718 292 L726 330 C722 360 716 380 716 402 Z" fill="#e9c33a"/><path d="M640 300 C660 292 690 296 705 310" stroke="#c8a028" stroke-width="4" fill="none" opacity=".6"/><path d="M672 232 C676 216 698 210 710 222 C718 234 724 252 731 272 C737 300 736 330 728 354 C716 360 696 356 688 345 C682 320 676 290 672 262 Z" fill="#dcb69c"/><path d="M690 232 C698 226 708 232 706 246" stroke="#b88a70" stroke-width="3" fill="none"/></g></g>
<path d="M559 393 L785 393 V462 L740 460 L700 458 L640 452 L590 449 L559 448 Z" fill="#f7f7f5"/>
<path d="M559 393 L785 393 V462 L740 460 L700 458 L640 452 L590 449 L559 448 Z" fill="url(#grid)" opacity=".8"/>
<path d="M484 371 L520 384 L556 396 L600 396 L650 392 L695 388 L740 398 L785 405 L785 437 L740 434 L695 430 L650 420 L625 416 L590 414 L556 411 L520 398 L491 386 Z" fill="#eee7d6"/>
<g opacity=".6" stroke="#3a3a3a" stroke-width="1.4"><path d="M506 396.4 l3 20"/><path d="M517 397.0 l3 17"/><path d="M528 397.7 l3 14"/><path d="M539 398.3 l3 20"/><path d="M550 399.0 l3 17"/><path d="M561 399.7 l3 14"/><path d="M572 400.3 l3 20"/><path d="M583 401.0 l3 17"/><path d="M594 401.6 l3 14"/><path d="M605 402.3 l3 20"/><path d="M616 403.0 l3 17"/><path d="M627 403.6 l3 14"/><path d="M638 404.3 l3 20"/><path d="M649 404.9 l3 17"/><path d="M660 405.6 l3 14"/><path d="M671 406.3 l3 20"/><path d="M682 406.9 l3 17"/><path d="M693 407.6 l3 14"/><path d="M704 408.2 l3 20"/><path d="M715 408.9 l3 17"/><path d="M726 409.6 l3 14"/><path d="M737 410.2 l3 20"/><path d="M748 410.9 l3 17"/><path d="M759 411.5 l3 14"/><path d="M770 412.2 l3 20"/><path d="M781 412.9 l3 17"/></g>
<g clip-path="url(#templeClip)"><rect x="480" y="440" width="310" height="180" fill="url(#sky)"/><g filter="url(#soft1)"><path d="M560 490 C600 470 680 478 785 500 V540 H489 V500 Z" fill="#5a665c" opacity=".6"/></g><rect x="480" y="615" width="310" height="130" fill="url(#water)"/><g filter="url(#leaf)"><path d="M489 505 C510 495 545 500 570 510 C590 505 620 500 640 515 C650 530 640 550 620 556 L560 560 C540 570 500 575 489 565 Z" fill="#2e3c29"/><ellipse cx="600" cy="515" rx="32" ry="12" fill="#3f4e36"/><ellipse cx="515" cy="520" rx="20" ry="12" fill="#3a4a32"/></g><path d="M507 568 L522 547 L632 547 L642 568 Z" fill="#b8a084"/><path d="M590 520 L588 580 M560 540 L575 585" stroke="#4a4a3a" stroke-width="2"/><rect x="489" y="568" width="296" height="10" fill="#6a6a5c"/><rect x="489" y="577" width="296" height="24" fill="#a28a82"/><rect x="640" y="556" width="66" height="30" fill="#9a6c5c"/><path d="M742 558 H785 V600 H742 Z" fill="#56564c"/><g filter="url(#leaf)"><rect x="489" y="588" width="296" height="26" fill="#56633a"/><ellipse cx="735" cy="585" rx="22" ry="30" fill="#4a4a38"/><ellipse cx="580" cy="590" rx="15" ry="12" fill="#6a7a5a"/></g><circle cx="520" cy="594" r="4" fill="#c07050"/><circle cx="585" cy="590" r="3" fill="#d08060"/><ellipse cx="510" cy="598" rx="10" ry="6" fill="#5a7a6a"/><ellipse cx="620" cy="605" rx="9" ry="7" fill="#a8b8a8"/><rect x="489" y="612" width="296" height="6" fill="#7e7a3c"/><g fill="#2b3527"><path d="M651 455 C655 448 668 448 672 455 L670 461 H652Z"/><path d="M647 463 C650 460 696 460 699 463 L701 475 H645Z"/><path d="M645 478 C648 475 698 475 701 478 L703 491 H643Z"/><path d="M641 495 C645 492 701 492 705 495 L708 509 H638Z"/><path d="M634 513 C640 510 706 510 712 513 L716 528 H630Z"/><path d="M611 536 C625 532 720 532 736 536 L745 558 H605Z"/><path d="M738 536 C750 530 775 530 785 533 V558 H733Z"/></g><g fill="#a07866"><rect x="656" y="461" width="34" height="3"/><rect x="652" y="475" width="42" height="4"/><rect x="650" y="491" width="46" height="4"/><rect x="648" y="509" width="50" height="5"/><rect x="645" y="528" width="56" height="6"/></g><g opacity=".5"><rect x="560" y="625" width="30" height="40" fill="#6a5a4a" filter="url(#soft)"/><rect x="650" y="625" width="50" height="35" fill="#6a5040" filter="url(#soft)"/></g><g filter="url(#soft1)" opacity=".8"><path d="M489 664 C520 658 545 671 575 664 C610 656 640 676 680 668 C720 660 750 672 785 664" stroke="#3e3c34" stroke-width="6" fill="none"/><path d="M500 676 C540 670 580 682 630 674 C670 668 720 682 785 674" stroke="#5a564c" stroke-width="4" fill="none"/><path d="M560 688 C600 682 640 694 700 686" stroke="#7a766c" stroke-width="3" fill="none"/></g></g>
<path d="M547 810 L572 749 L647 735 L769 721 L766 776 L730 790 L700 795 L627 799 Z" fill="#d2d3ca"/>
<g clip-path="url(#offerClip)"><rect x="450" y="860" width="340" height="165" fill="#a6b0b8"/><g filter="url(#soft2)"><ellipse cx="530" cy="925" rx="55" ry="20" fill="#5a8042"/><circle cx="472" cy="934" r="11" fill="#e27040"/><rect x="500" y="870" width="40" height="40" fill="#b8c0c8"/></g><path d="M470 962 L572 918 L600 930 L600 995 L500 980 Z" fill="#6a4a3e"/><g stroke="#5a3a30" stroke-width="1.2" opacity=".6"><path d="M490 965 L580 935 M495 975 L585 950 M510 982 L590 968"/></g><g filter="url(#soft1)"><path d="M598 880 C620 900 640 940 650 1000 L785 1005 L785 900 L700 880 Z" fill="#4a4a3a"/><path d="M650 930 L785 940 V1000 L660 990 Z" fill="#5a3a6a"/><path d="M598 918 C610 940 625 970 645 995 L665 990 C650 960 640 930 630 915 Z" fill="#6a3a8a"/><path d="M600 925 L606 942 L596 948 Z" fill="#8aa0d8"/><path d="M700 900 C720 890 745 900 748 940 L710 950 Z" fill="#e6c890"/><path d="M720 925 C740 905 770 900 785 915 V968 C765 965 740 975 722 960 Z" fill="#d03c80"/><circle cx="745" cy="950" r="9" fill="#e86aa0"/><circle cx="765" cy="930" r="7" fill="#b02a60"/><path d="M705 962 L785 958 L785 975 L718 990 Z" fill="#e0dcc4" opacity=".9"/><path d="M700 990 L785 982 V1018 L720 1018 Z" fill="#cfc6b0"/></g><g stroke="#ece6d6" stroke-width="5" stroke-linecap="round"><path d="M551 867 L577 880"/><path d="M517 879 L573 896"/><path d="M479 908 L572 918"/><path d="M476 946 L575 941"/><path d="M506 972 L584 958"/></g><g fill="#d8d0b8" stroke="#9a9078" stroke-width=".8"><path d="M580 868 l15 4 l-5 14 z"/><path d="M578 884 l15 4 l-5 14 z"/><path d="M576 900 l15 4 l-5 14 z"/><path d="M577 918 l15 4 l-5 14 z"/><path d="M580 935 l15 4 l-5 14 z"/><path d="M585 952 l15 4 l-5 14 z"/><path d="M592 968 l15 4 l-5 14 z"/><path d="M602 982 l15 4 l-5 14 z"/><path d="M615 992 l15 4 l-5 14 z"/><path d="M630 998 l15 4 l-5 14 z"/></g></g>
<path d="M434.0 969.9 L438.0 968.2 L442.0 967.3 L446.0 963.9 L450.0 962.0 L454.5 961.3 L459.0 959.1 L463.5 959.0 L468.0 958.4 L476.0 959.9 L484.0 958.8 L492.0 960.4 L500.0 960.8 L509.2 965.7 L518.5 968.1 L527.8 968.9 L537.0 974.4 L545.2 976.1 L553.5 977.0 L561.8 978.6 L570.0 979.0 L579.0 981.3 L588.0 985.6 L597.0 986.9 L606.0 990.1 L616.8 992.2 L627.5 993.6 L638.2 996.9 L649.0 998.8 L661.8 1001.5 L674.5 1002.1 L687.2 1003.9 L700.0 1005.0 L700 1072 L554 1071 L437 1073 Z" fill="#b9ab9b" filter="url(#grain)"/>
<path d="M554 1112 L556 1062 L565 1054 L606 1039 L650 1020 L692 1008 L743 1016 L785 1027 V1112 Z" fill="#e6c84a"/>
<g stroke="#a08838" stroke-width="2.6" fill="none" opacity=".8"><path d="M565 1075 c10 -10 20 -8 30 -18 c8 -8 15 -5 20 -12"/><path d="M590 1105 c10 -20 25 -25 35 -40 c5 -8 12 -10 18 -8"/><path d="M700 1030 c10 12 20 8 28 22 c4 8 10 10 16 8"/><path d="M735 1085 c12 -6 10 -20 25 -22"/><path d="M640 1105 c8 -20 22 -28 30 -45"/><path d="M680 1110 c15 -10 30 -25 50 -30"/><path d="M612 1060 c8 -2 12 6 20 2"/><path d="M660 1040 c0 10 8 14 14 12"/></g>
<g fill="#a08838" opacity=".8"><circle cx="770" cy="1050" r="3.2"/><circle cx="778" cy="1058" r="3"/><circle cx="764" cy="1058" r="3"/><circle cx="771" cy="1066" r="3"/><ellipse cx="575" cy="1090" rx="3" ry="6"/><ellipse cx="590" cy="1082" rx="3" ry="6"/><circle cx="700" cy="1060" r="3"/><circle cx="707" cy="1066" r="3"/><circle cx="694" cy="1066" r="3"/></g>
<path d="M785 1061 C750 1068 709 1082 640 1112 H785 Z" fill="#e9e6de" filter="url(#grain)"/>
<g stroke-linejoin="round" stroke-linecap="round"><path d="M691 740 C700 760 712 790 711 837 C709 850 705 862 702 868 C694 850 690 830 691 809 Z" fill="#6e5e3c" stroke="#5e4e34" stroke-width=".7"/><path d="M630 760 L608 760 C600 762 596 766 594 771 C588 768 578 758 568 752 C564 754 566 760 572 766 C566 764 560 762 558 765 C562 772 572 778 576 782 C578 788 582 792 588 793 C596 790 604 784 610 782 L632 782 Z" fill="#b8714b" stroke="#5e4e34" stroke-width=".8"/><path d="M605 760 L609 780" stroke="#e0b43a" stroke-width="5"/><path d="M706 764 C722 772 735 790 745 805 C750 812 752 816 755 818 C760 808 762 795 763 784 C764 776 766 768 770 762 C775 758 780 756 785 757 L785 774 C778 774 772 776 770 780 C770 795 768 812 762 826 C756 832 748 830 740 822 C728 810 718 795 704 786 Z" fill="#b8714b" stroke="#5e4e34" stroke-width=".8"/><path d="M726 790 L736 804" stroke="#e0b43a" stroke-width="6"/><path d="M756 774 L765 781" stroke="#e0b43a" stroke-width="5"/><path d="M627 760 C645 752 690 752 711 766 L706 793 L631 785 Z" fill="#b8714b" stroke="#5e4e34" stroke-width=".8"/><rect x="670" y="736" width="24" height="18" fill="#b8714b"/><path d="M665 707 L703 707 C705 720 704 732 698 740 C692 746 686 748 680 746 C672 742 666 735 665 725 Z" fill="#b8714b" stroke="#5e4e34" stroke-width=".8"/><path d="M672 718 h8 M688 717 h8 M682 722 l-2 10 h4 M678 738 h8" stroke="#4a3020" stroke-width="1" fill="none"/><path d="M644 749 C660 758 690 762 708 762 C704 772 696 782 688 788 L675 795 L662 786 C654 776 648 762 644 749 Z" fill="#e0b43a" stroke="#8a7030" stroke-width=".9"/><path d="M652 756 C665 766 690 768 702 766 M656 764 C668 772 688 774 698 772" stroke="#8a7030" stroke-width=".9" fill="none"/><path d="M631 785 C650 788 690 792 707 793 C704 808 702 818 699 822 C694 832 688 840 683 843 L625 832 C628 815 630 800 631 785 Z" fill="#3f9a95" stroke="#5e4e34" stroke-width=".8"/><g stroke="#2e5e5a" stroke-width=".9" fill="none" opacity=".8"><path d="M636 798 C660 800 685 806 703 808"/><path d="M634 812 C655 812 680 820 700 822"/><path d="M630 824 C650 826 670 832 690 836"/></g><path d="M624 832 L681 843 L680 860 L627 849 Z" fill="#e0b43a" stroke="#5e4e34" stroke-width=".8"/><path d="M627 849 L681 860 C690 872 696 882 700 893 C706 908 712 920 714 930 C717 945 717 955 716 963 C714 978 710 990 705 999 C700 1010 695 1018 691 1026 L680 1043 L641 1043 C644 1030 645 1012 647 990 C646 970 642 958 638 949 C630 940 622 932 619 926 C610 920 604 915 602 910 C598 900 598 890 600 882 C602 872 605 865 608 860 Z" fill="#3f9a95" stroke="#5e4e34" stroke-width=".8"/><g stroke="#2e5e5a" stroke-width=".9" fill="none" opacity=".75"><path d="M660 868 C672 920 690 970 688 1035"/><path d="M628 875 C645 878 665 876 680 884"/><path d="M640 892 C655 892 668 890 680 896"/></g><path d="M641 1040 C640 1048 645 1054 660 1055 C675 1056 690 1054 700 1050 C700 1046 692 1042 684 1040 Z" fill="#b8714b" stroke="#5e4e34" stroke-width=".8"/><path d="M648 707 C646 690 650 675 663 660 C672 652 680 650 688 651 C700 652 708 656 711 662 C718 670 723 676 725 684 C727 694 727 704 726 710 C725 716 723 722 721 724 C718 726 715 726 713 726 L705 710 L666 708 L660 722 C654 720 650 714 648 707 Z" fill="#d8b13a" stroke="#5e4e34" stroke-width="1"/><path d="M660 700 L680 686 L706 700 L708 709 L663 709 Z" fill="#e4c048" stroke="#5e4e34" stroke-width=".9"/><g stroke="#8a7030" stroke-width=".8" fill="none"><path d="M660 672 c5 -3 8 0 10 -2 M690 664 c4 2 6 -1 9 1 M705 680 c3 3 6 1 8 4 M655 690 c4 0 5 -3 8 -2 M715 695 c2 3 4 2 6 5"/></g></g>
<defs><linearGradient id="forest" x1="0" y1="0" x2="0" y2="1"><stop offset="0" stop-color="#c9d0bc"/><stop offset=".35" stop-color="#5a7a44"/><stop offset=".6" stop-color="#4e6e3a"/><stop offset=".7" stop-color="#7a9a58"/><stop offset="1" stop-color="#6e8e4c"/></linearGradient><radialGradient id="peach" cx=".6" cy=".45" r=".7"><stop offset="0" stop-color="#fbeadc"/><stop offset=".6" stop-color="#eed4c0"/><stop offset="1" stop-color="#caa890"/></radialGradient><linearGradient id="mount" x1="0" y1="0" x2="0" y2="1"><stop offset="0" stop-color="#9aa894"/><stop offset=".4" stop-color="#6e8464"/><stop offset="1" stop-color="#5e7458"/></linearGradient></defs>
<g><path d="M3 1012 L12 1007 L22 1010 L40 1005 L60 1008 L90 1006 L120 1008 L153 1006 V1111 H3 Z" fill="url(#forest)"/><g filter="url(#soft)"><ellipse cx="18" cy="1050" rx="16" ry="30" fill="#3a5630"/><ellipse cx="130" cy="1040" rx="28" ry="28" fill="#4a6838"/><ellipse cx="70" cy="1022" rx="30" ry="16" fill="#dfe4d6"/></g><g filter="url(#soft1)"><path d="M30 1052 C34 1044 48 1044 52 1052 L56 1078 L60 1090 L54 1104 L44 1100 L28 1104 L20 1094 L26 1078 Z" fill="#c4926c"/><ellipse cx="40" cy="1046" rx="8" ry="6" fill="#ecebe6"/><path d="M20 1083 L58 1085 L56 1100 L22 1100 Z" fill="#4c5c7c"/><path d="M72 1094 C88 1080 105 1066 116 1066 C126 1070 128 1090 122 1108 L74 1108 Z" fill="#b88a68"/><path d="M100 1068 L82 1050" stroke="#b88a68" stroke-width="4"/><ellipse cx="122" cy="1064" rx="9" ry="11" fill="#cc3a3a"/><path d="M74 1100 L118 1100 L116 1111 L76 1111 Z" fill="#4a3a3a"/><path d="M55 1040 C62 1030 80 1030 92 1038 L94 1060 L80 1066 L62 1056 Z" fill="#3a3228"/><path d="M70 1062 l-4 12 M78 1064 l2 12" stroke="#c8a050" stroke-width="2"/><path d="M142 1080 L134 1111 H152 Z" fill="#6a5a40"/></g><path d="M153 1000 L175 997 L200 995 L240 997 L270 994 L302 995 V1111 H153 Z" fill="url(#peach)"/><g filter="url(#soft1)"><path d="M154 1111 L154 1040 C156 1030 165 1025 170 1035 L176 1055 C180 1045 186 1040 190 1030 L184 1012 C190 1006 200 1008 208 1014 C215 1008 222 1012 222 1022 L218 1040 C226 1050 230 1064 226 1080 L218 1111 Z" fill="#1c110b"/><path d="M190 1005 C198 998 212 1000 216 1008 L210 1016 Z" fill="#2a1a12"/><path d="M160 1070 L150 1100 M226 1072 L240 1095" stroke="#1c110b" stroke-width="3"/><path d="M256 1111 C258 1096 266 1084 276 1078 C272 1068 278 1060 286 1062 C294 1070 292 1080 288 1086 L302 1094 V1111 Z" fill="#6a4030"/><path d="M280 1062 C272 1050 280 1040 290 1046" stroke="#6a4030" stroke-width="2" fill="none"/></g><path d="M302 1005 H434 V1111 H302 Z" fill="url(#mount)"/><g filter="url(#soft1)"><path d="M340 1060 C345 1050 370 1050 376 1060 L374 1080 L340 1080 Z" fill="#a87858"/><rect x="342" y="1057" width="31" height="20" fill="#dcc462"/><rect x="342" y="1075" width="31" height="14" fill="#dc92b2"/><path d="M326 1111 L340 1088 L376 1088 L386 1111 Z" fill="#cbbb8a"/><path d="M310 1060 L342 1064 M374 1062 L400 1050" stroke="#a87858" stroke-width="4"/><rect x="382" y="1064" width="26" height="17" fill="#d8c060"/><rect x="382" y="1080" width="26" height="11" fill="#d890ae"/><path d="M378 1111 L384 1090 L410 1090 L414 1111 Z" fill="#c4b484"/><rect x="408" y="1068" width="24" height="15" fill="#d4bc5c"/><rect x="408" y="1082" width="24" height="10" fill="#d48ca8"/><path d="M405 1111 L410 1092 L432 1092 L434 1111 Z" fill="#c0b080"/><rect x="302" y="1070" width="10" height="41" fill="#c8b888"/><ellipse cx="357" cy="1040" rx="7" ry="9" fill="#8a5a40"/><path d="M350 1036 C346 1046 348 1058 352 1064 M364 1036 C368 1046 366 1058 362 1064" stroke="#2a1a14" stroke-width="3" fill="none"/><ellipse cx="394" cy="1048" rx="6" ry="8" fill="#8a5a40"/><ellipse cx="420" cy="1052" rx="6" ry="8" fill="#8a5a40"/><g><circle cx="352" cy="1026" r="4" fill="#e04070"/><circle cx="358" cy="1023" r="4" fill="#40a0e0"/><circle cx="364" cy="1027" r="4" fill="#f0c030"/><circle cx="390" cy="1034" r="4" fill="#5040c0"/><circle cx="396" cy="1031" r="4" fill="#e05050"/><circle cx="416" cy="1040" r="4" fill="#d02040"/><circle cx="422" cy="1037" r="4" fill="#4050d0"/></g></g></g>
<text xml:space="preserve" x="425.5" y="41.8" font-family="Liberation Sans" font-size="28.5" font-weight="bold" fill="#e1e7c1" text-anchor="middle" textLength="261" lengthAdjust="spacingAndGlyphs" >TUGAS  AGENDA 1</text>
<text xml:space="preserve" x="426" y="77" font-family="Liberation Sans" font-size="28" font-weight="normal" fill="#e1e7c1" text-anchor="middle" textLength="120" lengthAdjust="spacingAndGlyphs" >kelompok</text>
<text xml:space="preserve" x="426.5" y="136" font-family="Liberation Sans" font-size="30.5" font-weight="normal" fill="#e1e7c1" text-anchor="middle" textLength="231" lengthAdjust="spacingAndGlyphs" >membuat VIDEO</text>
<text xml:space="preserve" x="426.5" y="179" font-family="Liberation Sans" font-size="30.4" font-weight="normal" fill="#e1e7c1" text-anchor="middle" textLength="329" lengthAdjust="spacingAndGlyphs" >VISUALISASI  BANGSA</text>
<text xml:space="preserve" x="427" y="211.5" font-family="Liberation Sans" font-size="19.5" font-weight="normal" fill="#e1e7c1" text-anchor="middle" textLength="227" lengthAdjust="spacingAndGlyphs" >(termasuk konteks ESDM)</text>
<g fill="#ebd49c"><circle cx="22" cy="408" r="14.7"/><ellipse cx="25.2" cy="410.4" rx="14.4" ry="12.8"/><path d="M21.6 414.0 L46.9 409.7 L22.4 402.0 Z"/><circle cx="49.4" cy="409.8" r="2.6"/><path d="M17.4 412.0 L37.2 425.4 L26.6 404.0 Z"/><circle cx="38.7" cy="427.1" r="1.7"/><path d="M16.1 407.4 L19.8 428.8 L27.9 408.6 Z"/><circle cx="19.6" cy="430.9" r="2.5"/><path d="M16.9 403.9 L10.1 422.8 L27.1 412.1 Z"/><path d="M19.0 403.7 L8.1 417.8 L25.0 412.3 Z"/><path d="M22.9 403.2 L3.5 404.4 L21.1 412.8 Z"/><circle cx="1.6" cy="404.1" r="2.0"/><path d="M25.2 405.2 L7.7 391.8 L18.8 410.8 Z"/><circle cx="6.3" cy="390.2" r="2.0"/><path d="M25.6 407.7 L20.3 388.5 L18.4 408.3 Z"/><path d="M25.4 410.3 L34.8 388.9 L18.6 405.7 Z"/><path d="M22.9 412.5 L39.6 404.5 L21.1 403.5 Z"/><circle cx="14.0" cy="376.0" r="1.6"/><circle cx="-6.2" cy="423.0" r="1.6"/></g>
<g fill="#5aa5bd"><circle cx="50" cy="641" r="7.4"/><ellipse cx="51.6" cy="642.2" rx="7.2" ry="6.4"/><path d="M49.1 642.6 L61.5 647.0 L50.9 639.4 Z"/><circle cx="62.6" cy="647.6" r="1.6"/><path d="M48.1 642.2 L56.3 650.8 L51.9 639.8 Z"/><path d="M48.0 641.0 L50.1 652.2 L52.0 641.0 Z"/><path d="M47.1 639.4 L44.2 651.4 L52.9 642.6 Z"/><path d="M49.2 638.9 L40.1 644.7 L50.8 643.1 Z"/><circle cx="39.1" cy="645.0" r="0.8"/><path d="M50.5 638.7 L40.3 638.7 L49.5 643.3 Z"/><path d="M51.7 639.7 L43.0 632.4 L48.3 642.3 Z"/><circle cx="42.3" cy="631.5" r="1.1"/><path d="M53.3 640.2 L47.4 630.5 L46.7 641.8 Z"/><path d="M52.8 642.2 L55.0 629.3 L47.2 639.8 Z"/><path d="M50.5 644.0 L61.9 638.9 L49.5 638.0 Z"/><circle cx="66.5" cy="639.0" r="0.8"/><circle cx="58.3" cy="654.2" r="0.8"/></g>
<g fill="#f0d74c"><circle cx="49" cy="670" r="7.4"/><ellipse cx="50.6" cy="671.2" rx="7.2" ry="6.4"/><path d="M48.7 672.3 L59.9 671.3 L49.3 667.7 Z"/><path d="M47.6 671.0 L54.1 677.0 L50.4 669.0 Z"/><path d="M45.7 670.6 L50.7 679.4 L52.3 669.4 Z"/><path d="M46.9 668.1 L41.9 677.9 L51.1 671.9 Z"/><circle cx="41.1" cy="678.7" r="1.4"/><path d="M48.4 667.1 L38.3 672.1 L49.6 672.9 Z"/><path d="M49.1 667.3 L37.0 669.6 L48.9 672.7 Z"/><path d="M50.5 668.0 L39.0 662.5 L47.5 672.0 Z"/><path d="M52.2 670.4 L50.5 658.3 L45.8 669.6 Z"/><path d="M51.5 672.1 L55.9 662.0 L46.5 667.9 Z"/><path d="M50.2 671.8 L56.6 665.0 L47.8 668.2 Z"/><circle cx="35.2" cy="675.9" r="0.8"/><circle cx="44.5" cy="683.7" r="0.8"/></g>
<g fill="#7fc03e"><circle cx="48" cy="700" r="8.3"/><ellipse cx="49.8" cy="701.4" rx="8.1" ry="7.2"/><path d="M47.7 702.7 L57.9 701.2 L48.3 697.3 Z"/><circle cx="58.9" cy="701.3" r="1.0"/><path d="M45.5 702.3 L57.7 710.6 L50.5 697.7 Z"/><path d="M45.6 700.5 L50.5 712.1 L50.4 699.5 Z"/><circle cx="50.7" cy="713.3" r="1.0"/><path d="M44.8 698.6 L42.1 713.2 L51.2 701.4 Z"/><path d="M47.4 697.5 L37.8 702.4 L48.6 702.5 Z"/><path d="M49.3 696.7 L34.9 695.0 L46.7 703.3 Z"/><circle cx="33.6" cy="694.5" r="1.6"/><path d="M49.9 698.7 L41.1 690.0 L46.1 701.3 Z"/><path d="M51.4 699.1 L44.1 686.0 L44.6 700.9 Z"/><path d="M50.7 701.3 L54.4 687.2 L45.3 698.7 Z"/><path d="M48.6 702.7 L59.9 697.5 L47.4 697.3 Z"/><circle cx="35.0" cy="706.0" r="0.9"/><circle cx="41.9" cy="716.8" r="0.9"/></g>
<g fill="#f0a43e"><circle cx="46" cy="752" r="7.4"/><ellipse cx="47.6" cy="753.2" rx="7.2" ry="6.4"/><path d="M45.1 754.9 L57.4 755.7 L46.9 749.1 Z"/><path d="M44.5 753.0 L52.9 762.8 L47.5 751.0 Z"/><path d="M42.8 751.5 L44.2 763.4 L49.2 752.5 Z"/><circle cx="44.0" cy="764.5" r="1.3"/><path d="M43.6 750.9 L41.3 762.0 L48.4 753.1 Z"/><circle cx="40.9" cy="763.0" r="1.0"/><path d="M44.6 749.4 L34.7 758.0 L47.4 754.6 Z"/><circle cx="33.6" cy="758.6" r="1.6"/><path d="M46.1 750.0 L34.7 751.2 L45.9 754.0 Z"/><circle cx="33.5" cy="751.1" r="1.6"/><path d="M48.2 749.5 L39.0 745.7 L43.8 754.5 Z"/><path d="M48.6 751.6 L43.8 739.2 L43.4 752.4 Z"/><path d="M48.6 753.2 L51.2 740.2 L43.4 750.8 Z"/><path d="M46.4 754.3 L55.7 750.2 L45.6 749.7 Z"/><circle cx="56.6" cy="750.0" r="0.9"/><circle cx="58.3" cy="757.4" r="0.8"/><circle cx="36.4" cy="744.7" r="0.8"/></g>
<g fill="#f2e04c"><circle cx="45" cy="809" r="7.4"/><ellipse cx="46.6" cy="810.2" rx="7.2" ry="6.4"/><path d="M44.0 811.3 L56.4 813.8 L46.0 806.7 Z"/><circle cx="57.5" cy="814.2" r="0.8"/><path d="M42.6 810.7 L51.1 817.7 L47.4 807.3 Z"/><path d="M42.0 808.8 L44.3 818.7 L48.0 809.2 Z"/><path d="M42.5 807.6 L39.5 818.5 L47.5 810.4 Z"/><circle cx="39.0" cy="819.5" r="1.3"/><path d="M44.3 806.0 L35.6 811.2 L45.7 812.0 Z"/><path d="M45.8 807.3 L35.9 804.9 L44.2 810.7 Z"/><path d="M46.6 808.0 L39.6 800.0 L43.4 810.0 Z"/><circle cx="39.0" cy="799.1" r="1.4"/><path d="M47.7 808.5 L42.8 796.2 L42.3 809.5 Z"/><circle cx="42.6" cy="794.9" r="1.4"/><path d="M47.8 810.5 L51.1 797.7 L42.2 807.5 Z"/><path d="M45.9 811.9 L56.2 805.5 L44.1 806.1 Z"/><circle cx="58.5" cy="811.4" r="0.8"/><circle cx="34.2" cy="801.0" r="0.8"/></g>
<text xml:space="preserve" x="43.7" y="358.7" font-family="Liberation Sans" font-size="21" font-weight="normal" fill="#67643a" text-anchor="start" textLength="425.5" lengthAdjust="spacingAndGlyphs" stroke="#67643a" stroke-width="0.45">Setiap anggota kelompok mencari 1</text>
<text xml:space="preserve" x="43.7" y="382.5" font-family="Liberation Sans" font-size="21" font-weight="normal" fill="#67643a" text-anchor="start" textLength="371" lengthAdjust="spacingAndGlyphs" stroke="#67643a" stroke-width="0.45">(satu) buah video yang berbeda</text>
<text xml:space="preserve" x="43.7" y="407.3" font-family="Liberation Sans" font-size="21" font-weight="normal" fill="#67643a" text-anchor="start" textLength="313" lengthAdjust="spacingAndGlyphs" stroke="#67643a" stroke-width="0.45">tentang keanekaragaman</text>
<text xml:space="preserve" x="364" y="407.3" font-family="Liberation Sans" font-size="19.5" font-weight="normal" fill="#67643a" text-anchor="start" textLength="95" lengthAdjust="spacingAndGlyphs" >Indonesia.</text>
<text xml:space="preserve" x="43.7" y="437.0" font-family="Liberation Sans" font-size="19.6" font-weight="normal" fill="#67643a" text-anchor="start" textLength="428" lengthAdjust="spacingAndGlyphs" >Selanjutnya sunting video dari masing-masing</text>
<text xml:space="preserve" x="43.7" y="461.3" font-family="Liberation Sans" font-size="19.6" font-weight="normal" fill="#67643a" text-anchor="start" textLength="410.6" lengthAdjust="spacingAndGlyphs" >peserta tersebut untuk digabungkan dengan</text>
<text xml:space="preserve" x="43.7" y="485.6" font-family="Liberation Sans" font-size="19.6" font-weight="normal" fill="#67643a" text-anchor="start" textLength="425.7" lengthAdjust="spacingAndGlyphs" >video lainnya sehingga menjadi 1 (satu) video</text>
<text xml:space="preserve" x="43.7" y="509.9" font-family="Liberation Sans" font-size="19.6" font-weight="normal" fill="#67643a" text-anchor="start" textLength="434" lengthAdjust="spacingAndGlyphs" >utuh yang menggambarkan tentang Indonesia.</text>
<text xml:space="preserve" x="43.7" y="534.2" font-family="Liberation Sans" font-size="19.6" font-weight="normal" fill="#67643a" text-anchor="start" textLength="416.3" lengthAdjust="spacingAndGlyphs" >Pada bagian akhir video tersebut tambahkan</text>
<text xml:space="preserve" x="43.7" y="558.5" font-family="Liberation Sans" font-size="19.6" font-weight="normal" fill="#67643a" text-anchor="start" textLength="377.8" lengthAdjust="spacingAndGlyphs" >tayangan pernyataan dari setiap Peserta</text>
<text xml:space="preserve" x="43.7" y="582.8" font-family="Liberation Sans" font-size="19.6" font-weight="normal" fill="#67643a" text-anchor="start" textLength="366" lengthAdjust="spacingAndGlyphs" >tentang Indonesia dengan kalimat yang</text>
<text xml:space="preserve" x="43.7" y="607.1" font-family="Liberation Sans" font-size="19.6" font-weight="normal" fill="#67643a" text-anchor="start" textLength="398.9" lengthAdjust="spacingAndGlyphs" >berbeda satu sama lainnya, serta dikaitkan</text>
<text xml:space="preserve" x="43.7" y="631.4" font-family="Liberation Sans" font-size="19.6" font-weight="normal" fill="#67643a" text-anchor="start" textLength="265" lengthAdjust="spacingAndGlyphs" >juga dengan konteks ESDM.</text>
<text xml:space="preserve" x="69.3" y="673.6" font-family="Liberation Sans" font-size="21.5" font-weight="normal" fill="#2b3042" text-anchor="start" textLength="185.7" lengthAdjust="spacingAndGlyphs" >Durasi maksimal 5</text>
<text xml:space="preserve" x="69.3" y="702.4" font-family="Liberation Sans" font-size="21.5" font-weight="normal" fill="#2b3042" text-anchor="start" textLength="216" lengthAdjust="spacingAndGlyphs" >menit  Buatlah dalam</text>
<text xml:space="preserve" x="69.3" y="732.2" font-family="Liberation Sans" font-size="21.5" font-weight="normal" fill="#2b3042" text-anchor="start" textLength="116" lengthAdjust="spacingAndGlyphs" >format MP4</text>
<text xml:space="preserve" x="65.3" y="765.8" font-family="Liberation Sans" font-size="22" font-weight="normal" fill="#2b3042" text-anchor="start" textLength="392" lengthAdjust="spacingAndGlyphs" >Waktu Pengumpulan 1 hari (Jumat, 22</text>
<text xml:space="preserve" x="65.3" y="793.2" font-family="Liberation Sans" font-size="22" font-weight="normal" fill="#2b3042" text-anchor="start" textLength="413" lengthAdjust="spacingAndGlyphs" >Agustus 2025) dan  diupload ke Kolabjar</text>
<text xml:space="preserve" x="65.3" y="820.6" font-family="Liberation Sans" font-size="22" font-weight="normal" fill="#2b3042" text-anchor="start" textLength="322" lengthAdjust="spacingAndGlyphs" >paling lambat Pukul 23.59 WIB.</text>
<text xml:space="preserve" x="65.3" y="856.9" font-family="Liberation Sans" font-size="22" font-weight="normal" fill="#2b3042" text-anchor="start" textLength="479" lengthAdjust="spacingAndGlyphs" >Upload juga di Sosmed (Facebook / Instagram,</text>
<text xml:space="preserve" x="65.3" y="883.6" font-family="Liberation Sans" font-size="22" font-weight="normal" fill="#2b3042" text-anchor="start" textLength="391.6" lengthAdjust="spacingAndGlyphs" >atau lainnya agar  dapat dinikmati dan</text>
<text xml:space="preserve" x="65.3" y="909.7" font-family="Liberation Sans" font-size="22" font-weight="normal" fill="#2b3042" text-anchor="start" textLength="277.5" lengthAdjust="spacingAndGlyphs" >disubscribe oleh orang lain.</text>
<g stroke="#d04040" stroke-width="1.3" stroke-dasharray="1.5 2" opacity=".8"><path d="M272 800 H357"/><path d="M397 800 H478"/><path d="M65 915.5 H178"/></g>
<text xml:space="preserve" x="43.5" y="963.9" font-family="Liberation Sans" font-size="23" font-weight="bold" fill="#0a0a0a" text-anchor="start" textLength="247" lengthAdjust="spacingAndGlyphs" >KRITERIA  PENILAIAN:</text>
<circle cx="70" cy="987.2" r="2.4" fill="#0a0a0a"/>
<text xml:space="preserve" x="81" y="993.7" font-family="Liberation Sans" font-size="20.5" font-weight="normal" fill="#0a0a0a" text-anchor="start" textLength="327" lengthAdjust="spacingAndGlyphs" >Keterkaitan Wawasan Kebangsaan</text>
<circle cx="70" cy="1013.7" r="2.4" fill="#0a0a0a"/>
<text xml:space="preserve" x="81" y="1020.2" font-family="Liberation Sans" font-size="20.5" font-weight="normal" fill="#0a0a0a" text-anchor="start" textLength="368" lengthAdjust="spacingAndGlyphs" >Kerjasama dan kekompakan Kelompok</text>
<circle cx="70" cy="1040.2" r="2.4" fill="#0a0a0a"/>
<text xml:space="preserve" x="81" y="1046.7" font-family="Liberation Sans" font-size="20.5" font-weight="normal" fill="#0a0a0a" text-anchor="start" textLength="323" lengthAdjust="spacingAndGlyphs" >Estetika Video dan Jumlah Viewer</text>
</g></svg>
<svg style="left:93px;top:451px" width="291" height="415" viewBox="0 0 785 1112" preserveAspectRatio="none"><g clip-path="url(#thumbClip)"><use href="#slideContent"/></g></svg>

</body></html>
